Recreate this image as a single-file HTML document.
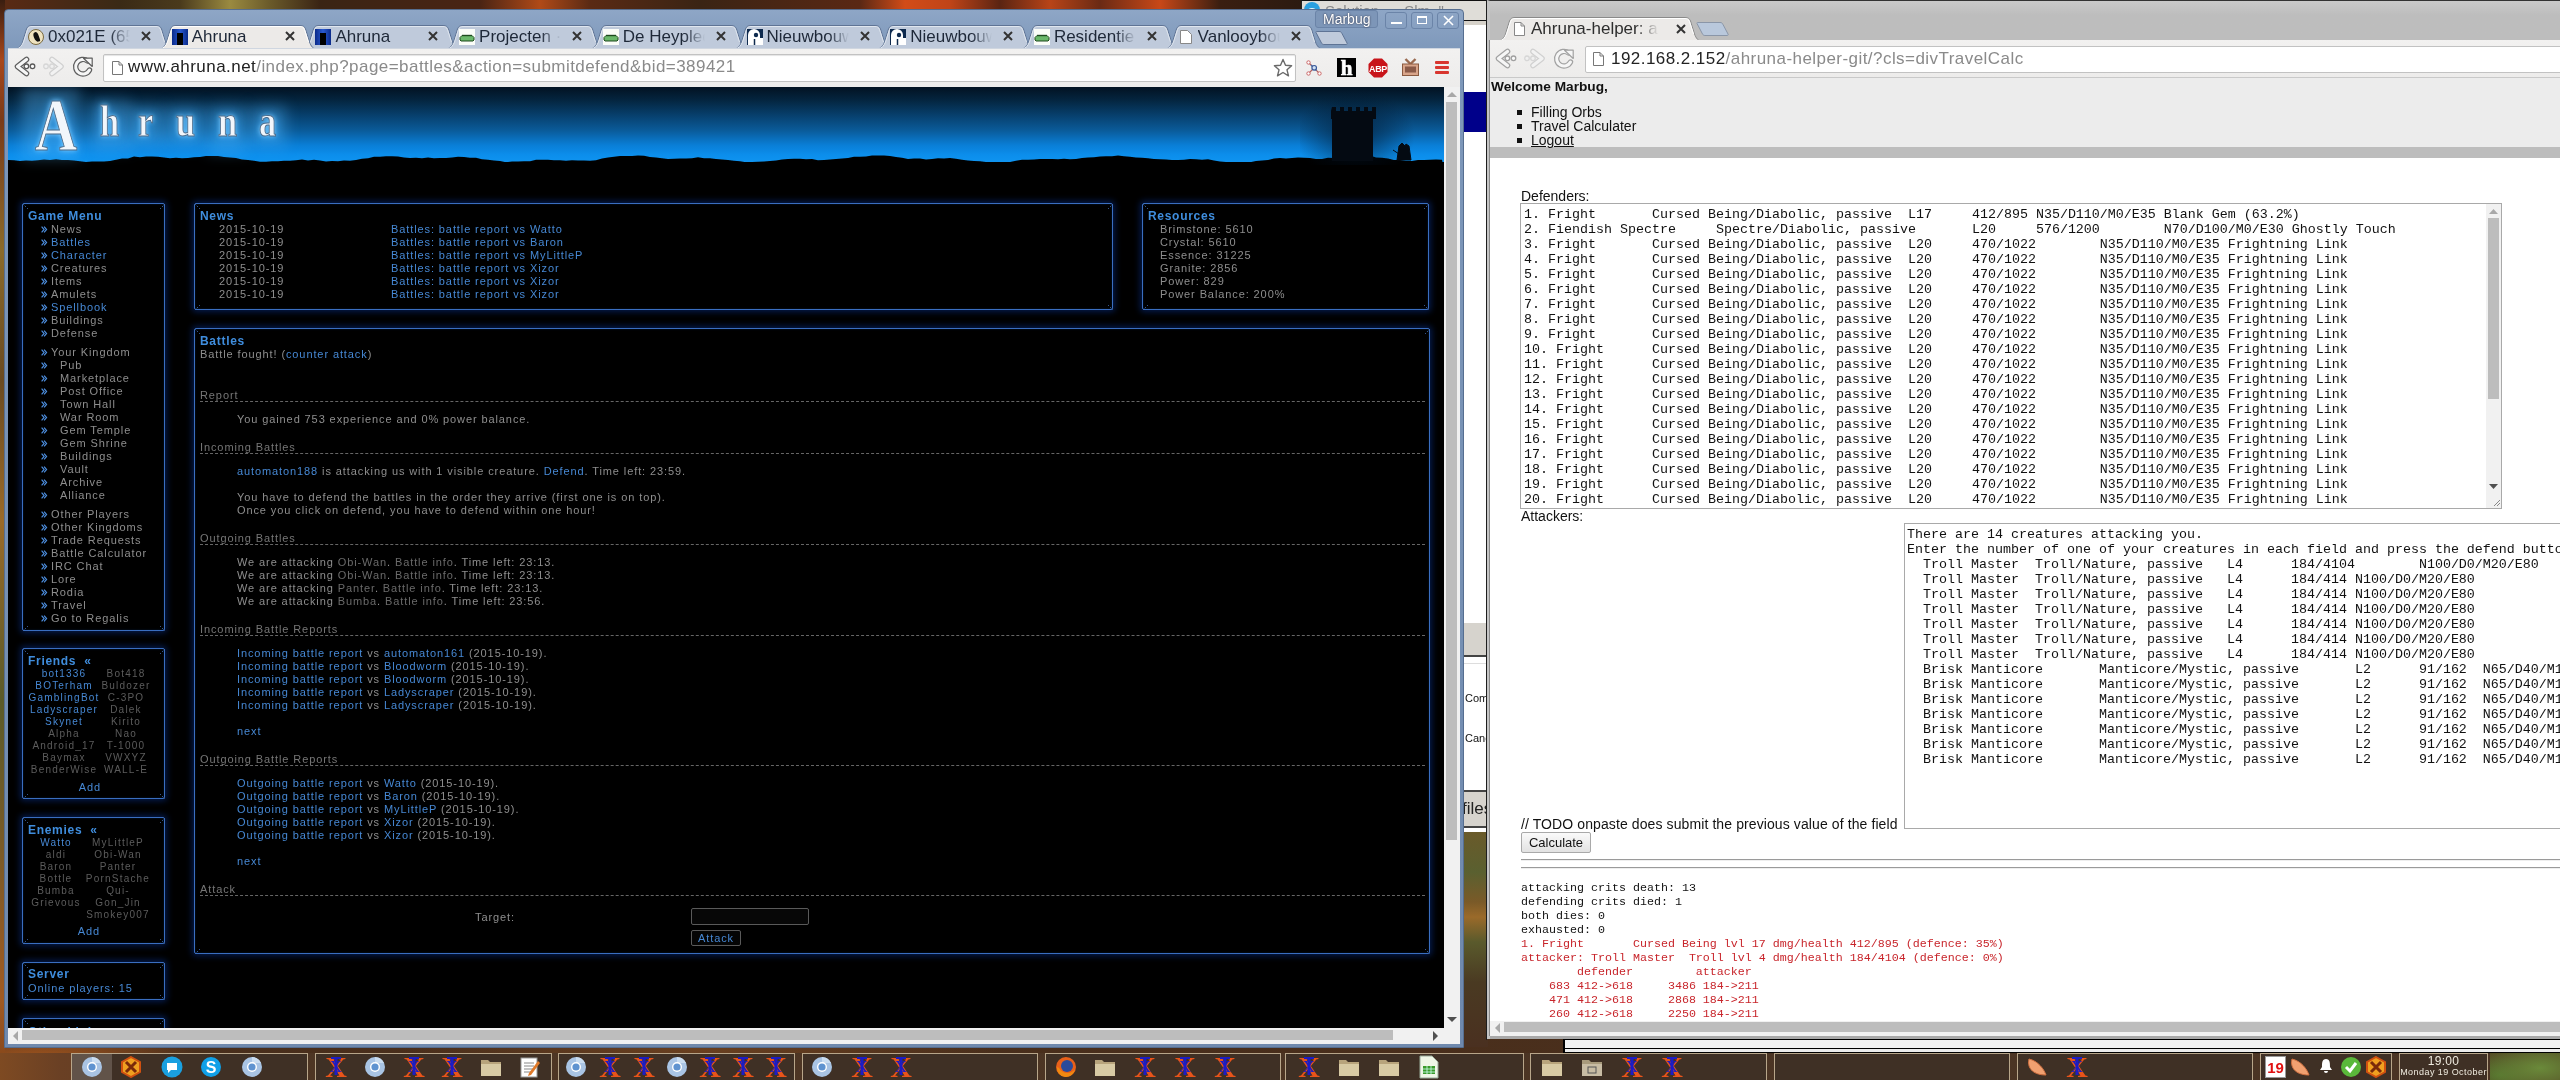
<!DOCTYPE html>
<html><head><meta charset="utf-8"><title>screen</title>
<style>
*{box-sizing:border-box}
html,body{margin:0;padding:0}
body{width:2560px;height:1080px;overflow:hidden;position:relative;will-change:transform;font-family:"Liberation Sans",sans-serif;background:#4a3020;}
.a{position:absolute}
.wp{position:absolute;left:0;top:0;width:2560px;height:1080px;
 background:
  radial-gradient(ellipse 40px 10px at 220px 3px,#a8a050,transparent),
  radial-gradient(ellipse 25px 10px at 540px 4px,#d8601a,transparent),
  radial-gradient(ellipse 30px 10px at 900px 4px,#e04a18,transparent),
  radial-gradient(ellipse 30px 10px at 945px 5px,#e05a20,transparent),
  radial-gradient(ellipse 25px 10px at 1050px 4px,#d04818,transparent),
  radial-gradient(ellipse 25px 10px at 1110px 4px,#c84018,transparent),
  radial-gradient(ellipse 25px 10px at 1160px 4px,#d04a18,transparent),
  radial-gradient(ellipse 20px 10px at 10px 4px,#8a3a1a,transparent),
  radial-gradient(ellipse 8px 200px at 0px 300px,#8a6a30,transparent),
  radial-gradient(ellipse 8px 300px at 0px 700px,#6a6a30,transparent),
  radial-gradient(ellipse 160px 40px at 40px 1062px,#a8581e,transparent),
  radial-gradient(ellipse 300px 30px at 700px 1050px,#6a4020,transparent),
  radial-gradient(ellipse 90px 40px at 2540px 1068px,#6a8a3a,transparent),radial-gradient(ellipse 40px 20px at 2500px 1075px,#4a6a28,transparent),
  radial-gradient(ellipse 30px 70px at 1475px 895px,#6a6a32,transparent),
  radial-gradient(ellipse 20px 30px at 1478px 915px,#9a6a2a,transparent),
  linear-gradient(#2a1c10,#3a2616 30px,#4a2f1c);}
/* chrome tabs */
.tab{position:absolute;height:24px;width:160px}
.tab .bg{position:absolute;inset:0;background:#bdc9da;clip-path:polygon(0 100%,13px 0,calc(100% - 13px) 0,100% 100%);}
.tab.act .bg{background:#eceae8}
.tab .t{position:absolute;left:34px;top:3px;font-size:17px;line-height:18px;color:#1e2838;white-space:nowrap;overflow:hidden;width:82px;
 -webkit-mask-image:linear-gradient(90deg,#000 75%,transparent);}
.tab .x{position:absolute;left:126px;top:5px;width:12px;height:12px}
.tab .ic{position:absolute;left:14px;top:4px;width:16px;height:16px}
/* ahruna */
.pg{position:absolute;background:#000;overflow:hidden}
.bx{position:absolute;border:1px solid #3a6ec0;box-shadow:0 0 6px 2px rgba(10,60,170,.45),inset 0 0 2px rgba(20,90,200,.3);border-radius:2px}
.v{font-family:"Liberation Sans",sans-serif;font-size:11px;letter-spacing:.9px;line-height:13px;white-space:pre;color:#8e8e8e}
.hb{font-weight:bold;color:#3f8ddd;letter-spacing:.9px}
.lk{color:#4688d4}
.gr{color:#9a9a9a}
.dg{color:#777}
.hd{position:absolute;color:#7d7d7d;border-bottom:1px dashed #6a6a6a;height:14px}
.ln{position:absolute}
/* right page */
.m{font-family:"Liberation Mono",monospace;font-size:13.33px;line-height:15px;white-space:pre;color:#111}

</style></head><body>
<div class="wp"></div>
<div class="a" style="left:0;top:0;width:1310px;height:10px;background:linear-gradient(90deg,#5a2a14 0,#3a2a16 120px,#4a3a1c 180px,#9a8a40 230px,#6a5a2a 270px,#3a2414 320px,#4a2414 480px,#b04a18 540px,#5a2a14 590px,#3a2414 700px,#5a2814 860px,#d24c18 905px,#c04418 950px,#5a2412 1000px,#b84418 1050px,#6a2a14 1100px,#c84818 1160px,#3a1e10 1220px,#2a1a10 1310px)"></div>
<div class="a" style="left:0;top:0;width:5px;height:1053px;background:linear-gradient(#3a1e10,#a8481c 60px,#7a3a18 120px,#8a6a2a 250px,#6a4a20 380px,#9a6a28 520px,#5a5a28 700px,#7a5a26 850px,#a05a22 1000px,#8a4a1c 1053px)"></div>
<div class="a" style="left:1462px;top:832px;width:26px;height:215px;background:linear-gradient(#6a5a2a 0,#5a6030 40px,#7a5a28 70px,#9a6a2a 85px,#5a5a2c 110px,#4a3a22 150px,#4a3020 215px)"></div>
<!-- background window strip between -->
<div class="a" style="left:1301px;top:0;width:190px;height:25px;background:linear-gradient(#dfddd8 0,#dfddd8 19px,#111 19px,#111 20px,#d6d2ca 20px,#d6d2ca 24px,#555 24px);border-top:1px solid #111;border-left:1px solid #222"></div>
<div class="a" style="left:1304px;top:2px;width:16px;height:16px;border-radius:50%;background:#2aa0e0"><div style="position:absolute;left:4px;top:6px;width:8px;height:6px;border-radius:50%;background:#eaf6fc"></div></div>
<div class="a" style="left:1325px;top:2px;font-size:15px;line-height:17px;color:#8a8a8a;white-space:nowrap">Solution .... Slm.."</div>
<div class="a" style="left:1462px;top:25px;width:30px;height:807px;background:#fff"></div>
<div class="a" style="left:1462px;top:92px;width:30px;height:40px;background:#00008a"></div>
<div class="a" style="left:1462px;top:623px;width:30px;height:34px;background:#d6d3cd;border-bottom:2px solid #444"></div>
<div class="a" style="left:1462px;top:663px;width:30px;height:1px;background:#ddd"></div>
<div class="a" style="left:1465px;top:692px;font-size:11px;color:#111">Com</div>
<div class="a" style="left:1465px;top:732px;font-size:11px;color:#111">Canc</div>
<div class="a" style="left:1462px;top:790px;width:30px;height:38px;background:#d6d3cd;border-top:2px solid #444;border-bottom:2px solid #444"></div>
<div class="a" style="left:1462px;top:799px;font-size:17px;color:#222">files</div>

<!-- left window frame -->
<div class="a" style="left:4px;top:9px;width:1460px;height:1039px;background:linear-gradient(#8ea6c6,#7e98ba 40px,#6f89ad);border:1px solid #566e90;border-radius:4px 4px 0 0"></div>
<!-- title buttons -->
<div class="a" style="left:1315px;top:10px;width:63px;height:18px;border:1px solid #6b84a8;border-radius:3px;background:#7d96b8"></div>
<div class="a" style="left:1323px;top:11px;font-size:14px;color:#fff;text-shadow:0 0 2px #223">Marbug</div>
<div class="a" style="left:1385px;top:12px;width:22px;height:17px;border:1px solid #6b84a8;border-radius:3px"></div>
<div class="a" style="left:1391px;top:22px;width:11px;height:2px;background:#fff"></div>
<div class="a" style="left:1411px;top:12px;width:22px;height:17px;border:1px solid #6b84a8;border-radius:3px"></div>
<div class="a" style="left:1417px;top:16px;width:10px;height:8px;border:1.5px solid #fff;border-top-width:2.5px"></div>
<div class="a" style="left:1437px;top:12px;width:22px;height:17px;border:1px solid #6b84a8;border-radius:3px"></div>
<svg class="a" style="left:1443px;top:15px" width="11" height="11"><path d="M1 1L10 10M10 1L1 10" stroke="#fff" stroke-width="1.6"/></svg>
<div class="tab" style="left:14.0px;top:25px"><svg class="bg" width="160" height="24" viewBox="0 0 160 24" style="position:absolute;left:0;top:0;clip-path:none;background:none"><path d="M0.5 24C5 24 7 21 8.5 17L12.5 4C13.5 1.5 15 0.5 18 0.5H142C145 0.5 146.5 1.5 147.5 4L151.5 17C153 21 155 24 159.5 24" fill="#bfcadb" stroke="#5f7495" stroke-width="1"/><path d="M2 24C6 23.5 8 20.5 9.5 17L13.5 4.5C14.5 2.2 16 1.5 18 1.5H142C144 1.5 145.5 2.2 146.5 4.5L150.5 17" fill="none" stroke="#dfe6ef" stroke-width="1"/></svg><div class="ic" style="border-radius:50%;background:#efe3c0;border:1px solid #7a6a40"><div style="position:absolute;left:5px;top:2px;width:5px;height:10px;background:#111;border-radius:50% 50% 20% 60%;transform:rotate(-20deg)"></div></div><div class="t">0x021E (65536)</div><svg class="x" viewBox="0 0 12 12"><path d="M2 2L10 10M10 2L2 10" stroke="#333" stroke-width="2"/></svg></div>
<div class="tab" style="left:301.4px;top:25px"><svg class="bg" width="160" height="24" viewBox="0 0 160 24" style="position:absolute;left:0;top:0;clip-path:none;background:none"><path d="M0.5 24C5 24 7 21 8.5 17L12.5 4C13.5 1.5 15 0.5 18 0.5H142C145 0.5 146.5 1.5 147.5 4L151.5 17C153 21 155 24 159.5 24" fill="#bfcadb" stroke="#5f7495" stroke-width="1"/><path d="M2 24C6 23.5 8 20.5 9.5 17L13.5 4.5C14.5 2.2 16 1.5 18 1.5H142C144 1.5 145.5 2.2 146.5 4.5L150.5 17" fill="none" stroke="#dfe6ef" stroke-width="1"/></svg><div class="ic" style="background:linear-gradient(90deg,#0a2a8a,#2a5ad0 50%,#0a2a8a)"><div style="position:absolute;left:5px;top:4px;width:6px;height:12px;background:#000"></div></div><div class="t">Ahruna</div><svg class="x" viewBox="0 0 12 12"><path d="M2 2L10 10M10 2L2 10" stroke="#333" stroke-width="2"/></svg></div>
<div class="tab" style="left:445.1px;top:25px"><svg class="bg" width="160" height="24" viewBox="0 0 160 24" style="position:absolute;left:0;top:0;clip-path:none;background:none"><path d="M0.5 24C5 24 7 21 8.5 17L12.5 4C13.5 1.5 15 0.5 18 0.5H142C145 0.5 146.5 1.5 147.5 4L151.5 17C153 21 155 24 159.5 24" fill="#bfcadb" stroke="#5f7495" stroke-width="1"/><path d="M2 24C6 23.5 8 20.5 9.5 17L13.5 4.5C14.5 2.2 16 1.5 18 1.5H142C144 1.5 145.5 2.2 146.5 4.5L150.5 17" fill="none" stroke="#dfe6ef" stroke-width="1"/></svg><div class="ic" style="background:#fbfdf8"><svg width="16" height="16" viewBox="0 0 16 16"><path d="M1 8.5L3 6.5h10l2 2v2.5l-1 1H2l-1-1z" fill="#6ab86a" stroke="#1e4a1e" stroke-width="1"/><path d="M3 6.5h10" stroke="#1e4a1e" stroke-width="1.4"/></svg></div><div class="t">Projecten · Heyplec</div><svg class="x" viewBox="0 0 12 12"><path d="M2 2L10 10M10 2L2 10" stroke="#333" stroke-width="2"/></svg></div>
<div class="tab" style="left:588.8px;top:25px"><svg class="bg" width="160" height="24" viewBox="0 0 160 24" style="position:absolute;left:0;top:0;clip-path:none;background:none"><path d="M0.5 24C5 24 7 21 8.5 17L12.5 4C13.5 1.5 15 0.5 18 0.5H142C145 0.5 146.5 1.5 147.5 4L151.5 17C153 21 155 24 159.5 24" fill="#bfcadb" stroke="#5f7495" stroke-width="1"/><path d="M2 24C6 23.5 8 20.5 9.5 17L13.5 4.5C14.5 2.2 16 1.5 18 1.5H142C144 1.5 145.5 2.2 146.5 4.5L150.5 17" fill="none" stroke="#dfe6ef" stroke-width="1"/></svg><div class="ic" style="background:#fbfdf8"><svg width="16" height="16" viewBox="0 0 16 16"><path d="M1 8.5L3 6.5h10l2 2v2.5l-1 1H2l-1-1z" fill="#6ab86a" stroke="#1e4a1e" stroke-width="1"/><path d="M3 6.5h10" stroke="#1e4a1e" stroke-width="1.4"/></svg></div><div class="t">De Heyplec</div><svg class="x" viewBox="0 0 12 12"><path d="M2 2L10 10M10 2L2 10" stroke="#333" stroke-width="2"/></svg></div>
<div class="tab" style="left:732.5px;top:25px"><svg class="bg" width="160" height="24" viewBox="0 0 160 24" style="position:absolute;left:0;top:0;clip-path:none;background:none"><path d="M0.5 24C5 24 7 21 8.5 17L12.5 4C13.5 1.5 15 0.5 18 0.5H142C145 0.5 146.5 1.5 147.5 4L151.5 17C153 21 155 24 159.5 24" fill="#bfcadb" stroke="#5f7495" stroke-width="1"/><path d="M2 24C6 23.5 8 20.5 9.5 17L13.5 4.5C14.5 2.2 16 1.5 18 1.5H142C144 1.5 145.5 2.2 146.5 4.5L150.5 17" fill="none" stroke="#dfe6ef" stroke-width="1"/></svg><div class="ic"><svg width="16" height="16" viewBox="0 0 16 16"><rect x="0" y="0" width="16" height="16" fill="#0e2a4e"/><path d="M1 16V6A6 6 0 0 1 13 6V9A3 3 0 0 1 8 9H16V16Z" fill="#fff"/><path d="M7.5 10v6" stroke="#0e2a4e" stroke-width="1.5"/><circle cx="9" cy="6" r="2.2" fill="#0e2a4e"/></svg></div><div class="t">Nieuwbouw</div><svg class="x" viewBox="0 0 12 12"><path d="M2 2L10 10M10 2L2 10" stroke="#333" stroke-width="2"/></svg></div>
<div class="tab" style="left:876.2px;top:25px"><svg class="bg" width="160" height="24" viewBox="0 0 160 24" style="position:absolute;left:0;top:0;clip-path:none;background:none"><path d="M0.5 24C5 24 7 21 8.5 17L12.5 4C13.5 1.5 15 0.5 18 0.5H142C145 0.5 146.5 1.5 147.5 4L151.5 17C153 21 155 24 159.5 24" fill="#bfcadb" stroke="#5f7495" stroke-width="1"/><path d="M2 24C6 23.5 8 20.5 9.5 17L13.5 4.5C14.5 2.2 16 1.5 18 1.5H142C144 1.5 145.5 2.2 146.5 4.5L150.5 17" fill="none" stroke="#dfe6ef" stroke-width="1"/></svg><div class="ic"><svg width="16" height="16" viewBox="0 0 16 16"><rect x="0" y="0" width="16" height="16" fill="#0e2a4e"/><path d="M1 16V6A6 6 0 0 1 13 6V9A3 3 0 0 1 8 9H16V16Z" fill="#fff"/><path d="M7.5 10v6" stroke="#0e2a4e" stroke-width="1.5"/><circle cx="9" cy="6" r="2.2" fill="#0e2a4e"/></svg></div><div class="t">Nieuwbouw</div><svg class="x" viewBox="0 0 12 12"><path d="M2 2L10 10M10 2L2 10" stroke="#333" stroke-width="2"/></svg></div>
<div class="tab" style="left:1019.9px;top:25px"><svg class="bg" width="160" height="24" viewBox="0 0 160 24" style="position:absolute;left:0;top:0;clip-path:none;background:none"><path d="M0.5 24C5 24 7 21 8.5 17L12.5 4C13.5 1.5 15 0.5 18 0.5H142C145 0.5 146.5 1.5 147.5 4L151.5 17C153 21 155 24 159.5 24" fill="#bfcadb" stroke="#5f7495" stroke-width="1"/><path d="M2 24C6 23.5 8 20.5 9.5 17L13.5 4.5C14.5 2.2 16 1.5 18 1.5H142C144 1.5 145.5 2.2 146.5 4.5L150.5 17" fill="none" stroke="#dfe6ef" stroke-width="1"/></svg><div class="ic" style="background:#fbfdf8"><svg width="16" height="16" viewBox="0 0 16 16"><path d="M1 8.5L3 6.5h10l2 2v2.5l-1 1H2l-1-1z" fill="#6ab86a" stroke="#1e4a1e" stroke-width="1"/><path d="M3 6.5h10" stroke="#1e4a1e" stroke-width="1.4"/></svg></div><div class="t">Residentie F</div><svg class="x" viewBox="0 0 12 12"><path d="M2 2L10 10M10 2L2 10" stroke="#333" stroke-width="2"/></svg></div>
<div class="tab" style="left:1163.6px;top:25px"><svg class="bg" width="160" height="24" viewBox="0 0 160 24" style="position:absolute;left:0;top:0;clip-path:none;background:none"><path d="M0.5 24C5 24 7 21 8.5 17L12.5 4C13.5 1.5 15 0.5 18 0.5H142C145 0.5 146.5 1.5 147.5 4L151.5 17C153 21 155 24 159.5 24" fill="#bfcadb" stroke="#5f7495" stroke-width="1"/><path d="M2 24C6 23.5 8 20.5 9.5 17L13.5 4.5C14.5 2.2 16 1.5 18 1.5H142C144 1.5 145.5 2.2 146.5 4.5L150.5 17" fill="none" stroke="#dfe6ef" stroke-width="1"/></svg><div class="ic" style="left:15px"><svg width="14" height="16"><path d="M1.5 1.5h7l4 4v9h-11z" fill="#fff" stroke="#888"/></svg></div><div class="t">Vanlooybouw</div><svg class="x" viewBox="0 0 12 12"><path d="M2 2L10 10M10 2L2 10" stroke="#333" stroke-width="2"/></svg></div>
<div class="tab act" style="left:157.7px;top:25px"><svg class="bg" width="160" height="24" viewBox="0 0 160 24" style="position:absolute;left:0;top:0;clip-path:none;background:none"><path d="M0 24.5C5 24.5 7 21 8.5 17L12.5 4C13.5 1.5 15 0.5 18 0.5H142C145 0.5 146.5 1.5 147.5 4L151.5 17C153 21 155 24.5 160 24.5Z" fill="#eceae8" stroke="#5f7495" stroke-width="1"/><path d="M2 24C6 23.5 8 20.5 9.5 17L13.5 4.5C14.5 2.2 16 1.5 18 1.5H142C144 1.5 145.5 2.2 146.5 4.5L150.5 17" fill="none" stroke="#fff" stroke-width="1"/></svg><div class="ic" style="background:linear-gradient(90deg,#0a2a8a,#2a5ad0 50%,#0a2a8a)"><div style="position:absolute;left:5px;top:4px;width:6px;height:12px;background:#000"></div></div><div class="t">Ahruna</div><svg class="x" viewBox="0 0 12 12"><path d="M2 2L10 10M10 2L2 10" stroke="#333" stroke-width="2"/></svg></div>
<svg class="a" style="left:1315px;top:30px" width="34" height="16" viewBox="0 0 34 16"><path d="M1.5 1.5H24C25.5 1.5 26.5 2.2 27 3.5L32 13C32.5 14 32 14.5 31 14.5H9C7.8 14.5 7 14 6.5 13L1 2.5C0.8 1.8 1 1.5 1.5 1.5Z" fill="#bfcadb" stroke="#5f7495" stroke-width="1"/></svg>
<div class="a" style="left:8px;top:48px;width:1452px;height:39px;background:linear-gradient(#f2f1f0,#edeceb);border-top:1px solid #cfd6e0"></div>
<!-- back/fwd/reload -->
<svg class="a" style="left:8px;top:48px" width="30" height="36" viewBox="0 0 30 36"><path d="M18.5 11.5L9.5 18.5L18.5 25.5" fill="none" stroke="#5e5e5e" stroke-width="5.6" stroke-linecap="round" stroke-linejoin="round"/><path d="M18.5 11.5L9.5 18.5L18.5 25.5" fill="none" stroke="#f6f6f6" stroke-width="3.2" stroke-linecap="round" stroke-linejoin="round"/><circle cx="18.4" cy="18.3" r="2.3" fill="#fafafa" stroke="#5a5a5a" stroke-width="1.3"/><circle cx="24.5" cy="18.3" r="2.3" fill="#fafafa" stroke="#5a5a5a" stroke-width="1.3"/></svg>
<svg class="a" style="left:38px;top:48px" width="30" height="36" viewBox="0 0 30 36"><path d="M14 11.5L23 18.5L14 25.5" fill="none" stroke="#d0d0d0" stroke-width="5.6" stroke-linecap="round" stroke-linejoin="round"/><path d="M14 11.5L23 18.5L14 25.5" fill="none" stroke="#f2f2f2" stroke-width="3.2" stroke-linecap="round" stroke-linejoin="round"/><circle cx="8" cy="18.3" r="2.3" fill="#f0f0f0" stroke="#d6d6d6" stroke-width="1.3"/><circle cx="14" cy="18.3" r="2.3" fill="#f0f0f0" stroke="#d6d6d6" stroke-width="1.3"/></svg>
<svg class="a" style="left:68px;top:48px" width="30" height="36" viewBox="0 0 30 36"><path d="M21.5 22A7.3 7.3 0 1 1 19.5 13" fill="none" stroke="#5e5e5e" stroke-width="5.4" stroke-linecap="round"/><path d="M21.5 22A7.3 7.3 0 1 1 19.5 13" fill="none" stroke="#f6f6f6" stroke-width="3" stroke-linecap="round"/><path d="M15.5 10.2L24.2 10.2L24.2 18.5Z" fill="#f6f6f6" stroke="#5e5e5e" stroke-width="1.2" stroke-linejoin="round"/></svg>
<!-- omnibox -->
<div class="a" style="left:103px;top:54px;width:1193px;height:28px;background:#fff;border:1px solid #c2c2c2;border-radius:2px;box-shadow:inset 0 1px 1px #e4e4e4"></div>
<svg class="a" style="left:111px;top:60px" width="13" height="16"><path d="M1.5 1.5h6.5l3.5 3.5v9.5h-10z M8 1.5v3.5h3.5" fill="#fff" stroke="#777"/></svg>
<div class="a" style="left:128px;top:57px;font-size:17px;line-height:20px;white-space:pre;color:#222;letter-spacing:.45px">www.ahruna.net<span style="color:#8a8a8a">/index.php?page=battles&amp;action=submitdefend&amp;bid=389421</span></div>
<svg class="a" style="left:1272px;top:57px" width="22" height="22" viewBox="0 0 22 22"><path d="M11 2.5L13.5 8.3L19.6 8.8L15 12.8L16.5 18.8L11 15.5L5.5 18.8L7 12.8L2.4 8.8L8.5 8.3Z" fill="#fff" stroke="#6a6a6a" stroke-width="1.4" stroke-linejoin="round"/></svg>
<!-- extension icons -->
<svg class="a" style="left:1305px;top:59px" width="18" height="18" viewBox="0 0 18 18"><path d="M3.5 3.5L9 9M3.5 14.5L9 9M14.5 14.5L9 9" stroke="#b06060" stroke-width="1.1" fill="none"/><path d="M6 6L9 9M9 9L11.5 11.5" stroke="#4a6aa0" stroke-width="1.3"/><circle cx="9.2" cy="8.8" r="2.3" fill="#cfe0f4" stroke="#3a5a9a" stroke-width="1.2"/><circle cx="3.5" cy="3.5" r="1.7" fill="#fff" stroke="#c66" stroke-width="1"/><circle cx="14.5" cy="14.5" r="1.7" fill="#fff" stroke="#c66" stroke-width="1"/><circle cx="3.5" cy="14.5" r="1.7" fill="#fff" stroke="#c66" stroke-width="1"/></svg>
<div class="a" style="left:1337px;top:58px;width:19px;height:19px;background:#000;color:#fff;font-family:'Liberation Serif',serif;font-weight:bold;font-size:21px;line-height:21px;text-align:center;-webkit-text-stroke:.7px #fff">h</div>
<svg class="a" style="left:1368px;top:58px" width="20" height="20" viewBox="0 0 20 20"><path d="M6 0.5h8l5.5 5.5v8l-5.5 5.5h-8l-5.5-5.5v-8z" fill="#c8141a"/><text x="10" y="13.6" font-family="Liberation Sans" font-weight="bold" font-size="9" letter-spacing="-0.4" fill="#fff" text-anchor="middle">ABP</text></svg>
<svg class="a" style="left:1401px;top:58px" width="19" height="19" viewBox="0 0 19 19"><path d="M4.5 1L9.5 6L14.5 1" stroke="#9a6a50" stroke-width="2.4" fill="none"/><rect x="1.5" y="6" width="16" height="11.5" fill="#d9a58a" stroke="#8a5a40"/><rect x="4" y="8.5" width="11" height="6" fill="#8a5a48"/></svg>
<div class="a" style="left:1435px;top:61px;width:14px;height:3px;background:#d8362f;border-radius:1px;box-shadow:0 5px 0 #d8362f,0 10px 0 #d8362f"></div>
<div class="a" style="left:0;top:0;width:2560px;height:1080px;clip-path:inset(87px 1116px 52px 8px)">
<div class="pg" style="left:8px;top:87px;width:1436px;height:941px"></div>
<div class="a" style="left:8px;top:87px;width:1436px;height:75px;background:linear-gradient(#021222 0px,#04253f 13px,#073f6c 28px,#0a5a98 43px,#0a7ed6 58px,#0c8eec 68px,#0f94f0 75px)"></div>
<svg class="a" style="left:8px;top:150px" width="1436" height="22" viewBox="0 0 1436 22"><defs><filter id="hb"><feGaussianBlur stdDeviation="0.7"/></filter></defs><path filter="url(#hb)" d="M0 20 L0 9.9 L6 10.2 L12 11.1 L18 10.4 L24 10.8 L30 10.2 L36 9.5 L42 9.9 L48 9.3 L54 9.9 L60 9.9 L66 10.4 L72 11.3 L78 12.1 L84 11.4 L90 11.4 L96 11.4 L102 11.1 L108 9.7 L114 8.6 L120 8.4 L126 6.6 L132 7.2 L138 6.5 L144 6.5 L150 6.8 L156 7.4 L162 8.3 L168 7.7 L174 8.2 L180 8.0 L186 7.3 L192 7.0 L198 6.1 L204 5.9 L210 6.1 L216 7.0 L222 7.4 L228 8.1 L234 9.4 L240 10.1 L246 10.7 L252 11.8 L258 11.8 L264 11.2 L270 11.2 L276 10.8 L282 10.8 L288 10.3 L294 9.6 L300 10.6 L306 9.8 L312 10.6 L318 11.4 L324 10.9 L330 11.3 L336 10.5 L342 10.7 L348 10.0 L354 8.8 L360 8.3 L366 6.8 L372 6.7 L378 6.3 L384 6.3 L390 6.4 L396 7.4 L402 8.0 L408 7.8 L414 8.3 L420 7.6 L426 8.3 L432 7.9 L438 8.0 L444 7.5 L450 6.7 L456 7.0 L462 7.8 L468 7.8 L474 9.2 L480 9.8 L486 10.5 L492 11.1 L498 12.3 L504 11.6 L510 11.5 L516 11.2 L522 11.2 L528 9.8 L534 9.8 L540 9.7 L546 10.2 L552 10.3 L558 10.7 L564 10.2 L570 10.5 L576 10.4 L582 10.7 L588 10.2 L594 8.4 L600 7.5 L606 6.7 L612 6.0 L618 5.9 L624 5.9 L630 5.6 L636 5.8 L642 6.9 L648 7.4 L654 8.2 L660 9.0 L666 8.8 L672 8.5 L678 8.4 L684 8.2 L690 7.2 L696 8.2 L702 8.3 L708 8.9 L714 9.5 L720 9.9 L726 10.8 L732 11.2 L738 12.3 L744 11.9 L750 11.7 L756 11.5 L762 10.9 L768 10.4 L774 9.4 L780 8.9 L786 8.8 L792 8.7 L798 9.2 L804 9.0 L810 10.3 L816 10.0 L822 9.4 L828 9.1 L834 8.6 L840 7.9 L846 6.7 L852 6.8 L858 6.4 L864 5.5 L870 5.6 L876 5.4 L882 6.1 L888 7.1 L894 7.7 L900 9.0 L906 8.6 L912 8.6 L918 9.6 L924 8.9 L930 8.2 L936 8.5 L942 7.9 L948 8.8 L954 9.8 L960 10.4 L966 10.9 L972 11.2 L978 11.9 L984 12.0 L990 12.8 L996 12.2 L1002 12.0 L1008 10.7 L1014 9.8 L1020 9.8 L1026 9.4 L1032 9.0 L1038 8.9 L1044 9.0 L1050 9.2 L1056 8.8 L1062 9.2 L1068 8.9 L1074 8.1 L1080 7.6 L1086 7.2 L1092 6.4 L1098 6.3 L1104 6.2 L1110 5.5 L1116 6.3 L1122 6.8 L1128 7.5 L1134 7.7 L1140 8.3 L1146 8.9 L1152 9.3 L1158 9.5 L1164 9.9 L1170 10.1 L1176 9.7 L1182 9.1 L1188 9.3 L1194 9.7 L1200 9.3 L1206 10.6 L1212 11.6 L1218 12.1 L1224 12.5 L1230 12.4 L1236 11.9 L1242 12.2 L1248 10.9 L1254 10.6 L1260 10.0 L1266 8.5 L1272 8.0 L1278 8.4 L1284 8.1 L1290 7.6 L1296 7.8 L1302 8.0 L1308 9.1 L1314 8.9 L1320 7.8 L1326 8.1 L1332 7.7 L1338 6.7 L1344 5.8 L1350 5.8 L1356 5.4 L1362 5.6 L1368 7.4 L1374 7.8 L1380 8.6 L1386 9.9 L1392 10.0 L1398 10.9 L1404 11.0 L1410 10.1 L1416 9.9 L1422 9.7 L1428 9.4 L1434 9.8 L1436 20Z" fill="#000"/></svg>
<div class="a" style="left:8px;top:165px;width:1436px;height:30px;background:#000"></div>
<div class="a" style="left:1300px;top:90px;width:140px;height:75px;background:radial-gradient(ellipse 60px 45px at 55px 45px,rgba(0,20,40,.7),transparent)"></div>
<svg class="a" style="left:1331px;top:104px" width="90" height="60" viewBox="0 0 90 60"><path d="M1 3h4v4h4v-4h4v4h4v-4h4v4h4v-4h4v4h4v-4h4v4h4v-4h4v12h-3v42h-41v-42h-3z" fill="#040a12"/><path d="M66 56l2-14 3-3 3 3 1-2 3 2 2 14z M62 46l6 4" fill="#040a12" stroke="#040a12"/></svg>
<div class="a" style="left:22px;top:88px;width:58px;height:70px;background:rgba(90,190,255,.35);filter:blur(7px)"></div>
<div class="a" style="left:90px;top:100px;width:40px;height:50px;background:rgba(90,190,255,.35);filter:blur(7px)"></div>
<div class="a" style="left:128px;top:106px;width:36px;height:40px;background:rgba(90,190,255,.35);filter:blur(7px)"></div>
<div class="a" style="left:166px;top:106px;width:38px;height:40px;background:rgba(90,190,255,.35);filter:blur(7px)"></div>
<div class="a" style="left:208px;top:106px;width:38px;height:46px;background:rgba(90,190,255,.35);filter:blur(7px)"></div>
<div class="a" style="left:250px;top:106px;width:36px;height:40px;background:rgba(90,190,255,.35);filter:blur(7px)"></div>
<div class="a" style="left:35px;top:87.2px;width:42px;height:75px;overflow:visible"><div style="display:inline-block;transform-origin:0 0;transform:scaleX(.78);font-family:'Liberation Serif',serif;font-weight:bold;font-size:75px;line-height:75px;color:#f2f6fb;-webkit-text-stroke:1px #4a6a8a;text-shadow:0 0 6px #8ad4ff,0 0 12px #3aa8ff">A</div></div>
<div class="a" style="left:100px;top:100.2px;width:17px;height:44px;overflow:visible"><div style="display:inline-block;transform-origin:0 0;transform:scaleX(.78);font-family:'Liberation Serif',serif;font-weight:bold;font-size:44px;line-height:44px;color:#f2f6fb;-webkit-text-stroke:1px #4a6a8a;text-shadow:0 0 6px #8ad4ff,0 0 12px #3aa8ff">h</div></div>
<div class="a" style="left:138px;top:100.2px;width:16px;height:44px;overflow:visible"><div style="display:inline-block;transform-origin:0 0;transform:scaleX(.78);font-family:'Liberation Serif',serif;font-weight:bold;font-size:44px;line-height:44px;color:#f2f6fb;-webkit-text-stroke:1px #4a6a8a;text-shadow:0 0 6px #8ad4ff,0 0 12px #3aa8ff">r</div></div>
<div class="a" style="left:176px;top:100.2px;width:19px;height:44px;overflow:visible"><div style="display:inline-block;transform-origin:0 0;transform:scaleX(.78);font-family:'Liberation Serif',serif;font-weight:bold;font-size:44px;line-height:44px;color:#f2f6fb;-webkit-text-stroke:1px #4a6a8a;text-shadow:0 0 6px #8ad4ff,0 0 12px #3aa8ff">u</div></div>
<div class="a" style="left:218px;top:100.2px;width:19px;height:44px;overflow:visible"><div style="display:inline-block;transform-origin:0 0;transform:scaleX(.78);font-family:'Liberation Serif',serif;font-weight:bold;font-size:44px;line-height:44px;color:#f2f6fb;-webkit-text-stroke:1px #4a6a8a;text-shadow:0 0 6px #8ad4ff,0 0 12px #3aa8ff">n</div></div>
<div class="a" style="left:259px;top:100.2px;width:18px;height:44px;overflow:visible"><div style="display:inline-block;transform-origin:0 0;transform:scaleX(.78);font-family:'Liberation Serif',serif;font-weight:bold;font-size:44px;line-height:44px;color:#f2f6fb;-webkit-text-stroke:1px #4a6a8a;text-shadow:0 0 6px #8ad4ff,0 0 12px #3aa8ff">a</div></div>
<div class="bx" style="left:22px;top:203px;width:143px;height:428px"></div>
<svg class="a" style="left:23px;top:204px" width="6" height="6"><path d="M0.5 0.5L5 5" stroke="#4a7ac8" stroke-width="1" stroke-dasharray="1 1.5" fill="none"/></svg>
<svg class="a" style="left:159px;top:204px" width="6" height="6"><path d="M5.5 0.5L1 5" stroke="#4a7ac8" stroke-width="1" stroke-dasharray="1 1.5" fill="none"/></svg>
<svg class="a" style="left:23px;top:625px" width="6" height="6"><path d="M0.5 5.5L5 1" stroke="#4a7ac8" stroke-width="1" stroke-dasharray="1 1.5" fill="none"/></svg>
<svg class="a" style="left:159px;top:625px" width="6" height="6"><path d="M5.5 5.5L1 1" stroke="#4a7ac8" stroke-width="1" stroke-dasharray="1 1.5" fill="none"/></svg>
<div class="bx" style="left:194px;top:203px;width:919px;height:107px"></div>
<svg class="a" style="left:195px;top:204px" width="6" height="6"><path d="M0.5 0.5L5 5" stroke="#4a7ac8" stroke-width="1" stroke-dasharray="1 1.5" fill="none"/></svg>
<svg class="a" style="left:1107px;top:204px" width="6" height="6"><path d="M5.5 0.5L1 5" stroke="#4a7ac8" stroke-width="1" stroke-dasharray="1 1.5" fill="none"/></svg>
<svg class="a" style="left:195px;top:304px" width="6" height="6"><path d="M0.5 5.5L5 1" stroke="#4a7ac8" stroke-width="1" stroke-dasharray="1 1.5" fill="none"/></svg>
<svg class="a" style="left:1107px;top:304px" width="6" height="6"><path d="M5.5 5.5L1 1" stroke="#4a7ac8" stroke-width="1" stroke-dasharray="1 1.5" fill="none"/></svg>
<div class="bx" style="left:1142px;top:203px;width:287px;height:107px"></div>
<svg class="a" style="left:1143px;top:204px" width="6" height="6"><path d="M0.5 0.5L5 5" stroke="#4a7ac8" stroke-width="1" stroke-dasharray="1 1.5" fill="none"/></svg>
<svg class="a" style="left:1423px;top:204px" width="6" height="6"><path d="M5.5 0.5L1 5" stroke="#4a7ac8" stroke-width="1" stroke-dasharray="1 1.5" fill="none"/></svg>
<svg class="a" style="left:1143px;top:304px" width="6" height="6"><path d="M0.5 5.5L5 1" stroke="#4a7ac8" stroke-width="1" stroke-dasharray="1 1.5" fill="none"/></svg>
<svg class="a" style="left:1423px;top:304px" width="6" height="6"><path d="M5.5 5.5L1 1" stroke="#4a7ac8" stroke-width="1" stroke-dasharray="1 1.5" fill="none"/></svg>
<div class="bx" style="left:194px;top:328px;width:1236px;height:626px"></div>
<svg class="a" style="left:195px;top:329px" width="6" height="6"><path d="M0.5 0.5L5 5" stroke="#4a7ac8" stroke-width="1" stroke-dasharray="1 1.5" fill="none"/></svg>
<svg class="a" style="left:1424px;top:329px" width="6" height="6"><path d="M5.5 0.5L1 5" stroke="#4a7ac8" stroke-width="1" stroke-dasharray="1 1.5" fill="none"/></svg>
<svg class="a" style="left:195px;top:948px" width="6" height="6"><path d="M0.5 5.5L5 1" stroke="#4a7ac8" stroke-width="1" stroke-dasharray="1 1.5" fill="none"/></svg>
<svg class="a" style="left:1424px;top:948px" width="6" height="6"><path d="M5.5 5.5L1 1" stroke="#4a7ac8" stroke-width="1" stroke-dasharray="1 1.5" fill="none"/></svg>
<div class="bx" style="left:22px;top:648px;width:143px;height:151px"></div>
<svg class="a" style="left:23px;top:649px" width="6" height="6"><path d="M0.5 0.5L5 5" stroke="#4a7ac8" stroke-width="1" stroke-dasharray="1 1.5" fill="none"/></svg>
<svg class="a" style="left:159px;top:649px" width="6" height="6"><path d="M5.5 0.5L1 5" stroke="#4a7ac8" stroke-width="1" stroke-dasharray="1 1.5" fill="none"/></svg>
<svg class="a" style="left:23px;top:793px" width="6" height="6"><path d="M0.5 5.5L5 1" stroke="#4a7ac8" stroke-width="1" stroke-dasharray="1 1.5" fill="none"/></svg>
<svg class="a" style="left:159px;top:793px" width="6" height="6"><path d="M5.5 5.5L1 1" stroke="#4a7ac8" stroke-width="1" stroke-dasharray="1 1.5" fill="none"/></svg>
<div class="bx" style="left:22px;top:817px;width:143px;height:127px"></div>
<svg class="a" style="left:23px;top:818px" width="6" height="6"><path d="M0.5 0.5L5 5" stroke="#4a7ac8" stroke-width="1" stroke-dasharray="1 1.5" fill="none"/></svg>
<svg class="a" style="left:159px;top:818px" width="6" height="6"><path d="M5.5 0.5L1 5" stroke="#4a7ac8" stroke-width="1" stroke-dasharray="1 1.5" fill="none"/></svg>
<svg class="a" style="left:23px;top:938px" width="6" height="6"><path d="M0.5 5.5L5 1" stroke="#4a7ac8" stroke-width="1" stroke-dasharray="1 1.5" fill="none"/></svg>
<svg class="a" style="left:159px;top:938px" width="6" height="6"><path d="M5.5 5.5L1 1" stroke="#4a7ac8" stroke-width="1" stroke-dasharray="1 1.5" fill="none"/></svg>
<div class="bx" style="left:22px;top:962px;width:143px;height:38px"></div>
<svg class="a" style="left:23px;top:963px" width="6" height="6"><path d="M0.5 0.5L5 5" stroke="#4a7ac8" stroke-width="1" stroke-dasharray="1 1.5" fill="none"/></svg>
<svg class="a" style="left:159px;top:963px" width="6" height="6"><path d="M5.5 0.5L1 5" stroke="#4a7ac8" stroke-width="1" stroke-dasharray="1 1.5" fill="none"/></svg>
<svg class="a" style="left:23px;top:994px" width="6" height="6"><path d="M0.5 5.5L5 1" stroke="#4a7ac8" stroke-width="1" stroke-dasharray="1 1.5" fill="none"/></svg>
<svg class="a" style="left:159px;top:994px" width="6" height="6"><path d="M5.5 5.5L1 1" stroke="#4a7ac8" stroke-width="1" stroke-dasharray="1 1.5" fill="none"/></svg>
<div class="bx" style="left:22px;top:1018px;width:143px;height:23px"></div>
<svg class="a" style="left:23px;top:1019px" width="6" height="6"><path d="M0.5 0.5L5 5" stroke="#4a7ac8" stroke-width="1" stroke-dasharray="1 1.5" fill="none"/></svg>
<svg class="a" style="left:159px;top:1019px" width="6" height="6"><path d="M5.5 0.5L1 5" stroke="#4a7ac8" stroke-width="1" stroke-dasharray="1 1.5" fill="none"/></svg>
<svg class="a" style="left:23px;top:1035px" width="6" height="6"><path d="M0.5 5.5L5 1" stroke="#4a7ac8" stroke-width="1" stroke-dasharray="1 1.5" fill="none"/></svg>
<svg class="a" style="left:159px;top:1035px" width="6" height="6"><path d="M5.5 5.5L1 1" stroke="#4a7ac8" stroke-width="1" stroke-dasharray="1 1.5" fill="none"/></svg>
<div class="a v hb" style="left:28px;top:210px;letter-spacing:.7px;font-size:12px">Game Menu</div>
<svg class="a" style="left:41px;top:226px" width="7" height="7" viewBox="0 0 7 7"><path d="M0.6 0.6L3.1 3.5L0.6 6.4M3.1 0.6L5.6 3.5L3.1 6.4" fill="none" stroke="#4d8fe0" stroke-width="1.15"/></svg>
<div class="a v" style="left:51px;top:223px;">News</div>
<svg class="a" style="left:41px;top:239px" width="7" height="7" viewBox="0 0 7 7"><path d="M0.6 0.6L3.1 3.5L0.6 6.4M3.1 0.6L5.6 3.5L3.1 6.4" fill="none" stroke="#4d8fe0" stroke-width="1.15"/></svg>
<div class="a v lk" style="left:51px;top:236px;">Battles</div>
<svg class="a" style="left:41px;top:252px" width="7" height="7" viewBox="0 0 7 7"><path d="M0.6 0.6L3.1 3.5L0.6 6.4M3.1 0.6L5.6 3.5L3.1 6.4" fill="none" stroke="#4d8fe0" stroke-width="1.15"/></svg>
<div class="a v lk" style="left:51px;top:249px;">Character</div>
<svg class="a" style="left:41px;top:265px" width="7" height="7" viewBox="0 0 7 7"><path d="M0.6 0.6L3.1 3.5L0.6 6.4M3.1 0.6L5.6 3.5L3.1 6.4" fill="none" stroke="#4d8fe0" stroke-width="1.15"/></svg>
<div class="a v" style="left:51px;top:262px;">Creatures</div>
<svg class="a" style="left:41px;top:278px" width="7" height="7" viewBox="0 0 7 7"><path d="M0.6 0.6L3.1 3.5L0.6 6.4M3.1 0.6L5.6 3.5L3.1 6.4" fill="none" stroke="#4d8fe0" stroke-width="1.15"/></svg>
<div class="a v" style="left:51px;top:275px;">Items</div>
<svg class="a" style="left:41px;top:291px" width="7" height="7" viewBox="0 0 7 7"><path d="M0.6 0.6L3.1 3.5L0.6 6.4M3.1 0.6L5.6 3.5L3.1 6.4" fill="none" stroke="#4d8fe0" stroke-width="1.15"/></svg>
<div class="a v" style="left:51px;top:288px;">Amulets</div>
<svg class="a" style="left:41px;top:304px" width="7" height="7" viewBox="0 0 7 7"><path d="M0.6 0.6L3.1 3.5L0.6 6.4M3.1 0.6L5.6 3.5L3.1 6.4" fill="none" stroke="#4d8fe0" stroke-width="1.15"/></svg>
<div class="a v lk" style="left:51px;top:301px;">Spellbook</div>
<svg class="a" style="left:41px;top:317px" width="7" height="7" viewBox="0 0 7 7"><path d="M0.6 0.6L3.1 3.5L0.6 6.4M3.1 0.6L5.6 3.5L3.1 6.4" fill="none" stroke="#4d8fe0" stroke-width="1.15"/></svg>
<div class="a v" style="left:51px;top:314px;">Buildings</div>
<svg class="a" style="left:41px;top:330px" width="7" height="7" viewBox="0 0 7 7"><path d="M0.6 0.6L3.1 3.5L0.6 6.4M3.1 0.6L5.6 3.5L3.1 6.4" fill="none" stroke="#4d8fe0" stroke-width="1.15"/></svg>
<div class="a v" style="left:51px;top:327px;">Defense</div>
<svg class="a" style="left:41px;top:349px" width="7" height="7" viewBox="0 0 7 7"><path d="M0.6 0.6L3.1 3.5L0.6 6.4M3.1 0.6L5.6 3.5L3.1 6.4" fill="none" stroke="#4d8fe0" stroke-width="1.15"/></svg>
<div class="a v" style="left:51px;top:346px;">Your Kingdom</div>
<svg class="a" style="left:41px;top:362px" width="7" height="7" viewBox="0 0 7 7"><path d="M0.6 0.6L3.1 3.5L0.6 6.4M3.1 0.6L5.6 3.5L3.1 6.4" fill="none" stroke="#4d8fe0" stroke-width="1.15"/></svg>
<div class="a v" style="left:60px;top:359px;">Pub</div>
<svg class="a" style="left:41px;top:375px" width="7" height="7" viewBox="0 0 7 7"><path d="M0.6 0.6L3.1 3.5L0.6 6.4M3.1 0.6L5.6 3.5L3.1 6.4" fill="none" stroke="#4d8fe0" stroke-width="1.15"/></svg>
<div class="a v" style="left:60px;top:372px;">Marketplace</div>
<svg class="a" style="left:41px;top:388px" width="7" height="7" viewBox="0 0 7 7"><path d="M0.6 0.6L3.1 3.5L0.6 6.4M3.1 0.6L5.6 3.5L3.1 6.4" fill="none" stroke="#4d8fe0" stroke-width="1.15"/></svg>
<div class="a v" style="left:60px;top:385px;">Post Office</div>
<svg class="a" style="left:41px;top:401px" width="7" height="7" viewBox="0 0 7 7"><path d="M0.6 0.6L3.1 3.5L0.6 6.4M3.1 0.6L5.6 3.5L3.1 6.4" fill="none" stroke="#4d8fe0" stroke-width="1.15"/></svg>
<div class="a v" style="left:60px;top:398px;">Town Hall</div>
<svg class="a" style="left:41px;top:414px" width="7" height="7" viewBox="0 0 7 7"><path d="M0.6 0.6L3.1 3.5L0.6 6.4M3.1 0.6L5.6 3.5L3.1 6.4" fill="none" stroke="#4d8fe0" stroke-width="1.15"/></svg>
<div class="a v" style="left:60px;top:411px;">War Room</div>
<svg class="a" style="left:41px;top:427px" width="7" height="7" viewBox="0 0 7 7"><path d="M0.6 0.6L3.1 3.5L0.6 6.4M3.1 0.6L5.6 3.5L3.1 6.4" fill="none" stroke="#4d8fe0" stroke-width="1.15"/></svg>
<div class="a v" style="left:60px;top:424px;">Gem Temple</div>
<svg class="a" style="left:41px;top:440px" width="7" height="7" viewBox="0 0 7 7"><path d="M0.6 0.6L3.1 3.5L0.6 6.4M3.1 0.6L5.6 3.5L3.1 6.4" fill="none" stroke="#4d8fe0" stroke-width="1.15"/></svg>
<div class="a v" style="left:60px;top:437px;">Gem Shrine</div>
<svg class="a" style="left:41px;top:453px" width="7" height="7" viewBox="0 0 7 7"><path d="M0.6 0.6L3.1 3.5L0.6 6.4M3.1 0.6L5.6 3.5L3.1 6.4" fill="none" stroke="#4d8fe0" stroke-width="1.15"/></svg>
<div class="a v" style="left:60px;top:450px;">Buildings</div>
<svg class="a" style="left:41px;top:466px" width="7" height="7" viewBox="0 0 7 7"><path d="M0.6 0.6L3.1 3.5L0.6 6.4M3.1 0.6L5.6 3.5L3.1 6.4" fill="none" stroke="#4d8fe0" stroke-width="1.15"/></svg>
<div class="a v" style="left:60px;top:463px;">Vault</div>
<svg class="a" style="left:41px;top:479px" width="7" height="7" viewBox="0 0 7 7"><path d="M0.6 0.6L3.1 3.5L0.6 6.4M3.1 0.6L5.6 3.5L3.1 6.4" fill="none" stroke="#4d8fe0" stroke-width="1.15"/></svg>
<div class="a v" style="left:60px;top:476px;">Archive</div>
<svg class="a" style="left:41px;top:492px" width="7" height="7" viewBox="0 0 7 7"><path d="M0.6 0.6L3.1 3.5L0.6 6.4M3.1 0.6L5.6 3.5L3.1 6.4" fill="none" stroke="#4d8fe0" stroke-width="1.15"/></svg>
<div class="a v" style="left:60px;top:489px;">Alliance</div>
<svg class="a" style="left:41px;top:511px" width="7" height="7" viewBox="0 0 7 7"><path d="M0.6 0.6L3.1 3.5L0.6 6.4M3.1 0.6L5.6 3.5L3.1 6.4" fill="none" stroke="#4d8fe0" stroke-width="1.15"/></svg>
<div class="a v" style="left:51px;top:508px;">Other Players</div>
<svg class="a" style="left:41px;top:524px" width="7" height="7" viewBox="0 0 7 7"><path d="M0.6 0.6L3.1 3.5L0.6 6.4M3.1 0.6L5.6 3.5L3.1 6.4" fill="none" stroke="#4d8fe0" stroke-width="1.15"/></svg>
<div class="a v" style="left:51px;top:521px;">Other Kingdoms</div>
<svg class="a" style="left:41px;top:537px" width="7" height="7" viewBox="0 0 7 7"><path d="M0.6 0.6L3.1 3.5L0.6 6.4M3.1 0.6L5.6 3.5L3.1 6.4" fill="none" stroke="#4d8fe0" stroke-width="1.15"/></svg>
<div class="a v" style="left:51px;top:534px;">Trade Requests</div>
<svg class="a" style="left:41px;top:550px" width="7" height="7" viewBox="0 0 7 7"><path d="M0.6 0.6L3.1 3.5L0.6 6.4M3.1 0.6L5.6 3.5L3.1 6.4" fill="none" stroke="#4d8fe0" stroke-width="1.15"/></svg>
<div class="a v" style="left:51px;top:547px;">Battle Calculator</div>
<svg class="a" style="left:41px;top:563px" width="7" height="7" viewBox="0 0 7 7"><path d="M0.6 0.6L3.1 3.5L0.6 6.4M3.1 0.6L5.6 3.5L3.1 6.4" fill="none" stroke="#4d8fe0" stroke-width="1.15"/></svg>
<div class="a v" style="left:51px;top:560px;">IRC Chat</div>
<svg class="a" style="left:41px;top:576px" width="7" height="7" viewBox="0 0 7 7"><path d="M0.6 0.6L3.1 3.5L0.6 6.4M3.1 0.6L5.6 3.5L3.1 6.4" fill="none" stroke="#4d8fe0" stroke-width="1.15"/></svg>
<div class="a v" style="left:51px;top:573px;">Lore</div>
<svg class="a" style="left:41px;top:589px" width="7" height="7" viewBox="0 0 7 7"><path d="M0.6 0.6L3.1 3.5L0.6 6.4M3.1 0.6L5.6 3.5L3.1 6.4" fill="none" stroke="#4d8fe0" stroke-width="1.15"/></svg>
<div class="a v" style="left:51px;top:586px;">Rodia</div>
<svg class="a" style="left:41px;top:602px" width="7" height="7" viewBox="0 0 7 7"><path d="M0.6 0.6L3.1 3.5L0.6 6.4M3.1 0.6L5.6 3.5L3.1 6.4" fill="none" stroke="#4d8fe0" stroke-width="1.15"/></svg>
<div class="a v" style="left:51px;top:599px;">Travel</div>
<svg class="a" style="left:41px;top:615px" width="7" height="7" viewBox="0 0 7 7"><path d="M0.6 0.6L3.1 3.5L0.6 6.4M3.1 0.6L5.6 3.5L3.1 6.4" fill="none" stroke="#4d8fe0" stroke-width="1.15"/></svg>
<div class="a v" style="left:51px;top:612px;">Go to Regalis</div>
<div class="a v hb" style="left:28px;top:655px;letter-spacing:.7px;font-size:12px">Friends &nbsp;«</div>
<div class="a v" style="left:24px;width:80px;text-align:center;top:667px;font-size:10px;letter-spacing:1.2px;color:#4688d4">bot1336</div>
<div class="a v" style="left:86px;width:80px;text-align:center;top:667px;font-size:10px;letter-spacing:1.2px;color:#5c5c5c">Bot418</div>
<div class="a v" style="left:24px;width:80px;text-align:center;top:679px;font-size:10px;letter-spacing:1.2px;color:#4688d4">BOTerham</div>
<div class="a v" style="left:86px;width:80px;text-align:center;top:679px;font-size:10px;letter-spacing:1.2px;color:#5c5c5c">Buldozer</div>
<div class="a v" style="left:24px;width:80px;text-align:center;top:691px;font-size:10px;letter-spacing:1.2px;color:#4688d4">GamblingBot</div>
<div class="a v" style="left:86px;width:80px;text-align:center;top:691px;font-size:10px;letter-spacing:1.2px;color:#5c5c5c">C-3PO</div>
<div class="a v" style="left:24px;width:80px;text-align:center;top:703px;font-size:10px;letter-spacing:1.2px;color:#4688d4">Ladyscraper</div>
<div class="a v" style="left:86px;width:80px;text-align:center;top:703px;font-size:10px;letter-spacing:1.2px;color:#5c5c5c">Dalek</div>
<div class="a v" style="left:24px;width:80px;text-align:center;top:715px;font-size:10px;letter-spacing:1.2px;color:#4688d4">Skynet</div>
<div class="a v" style="left:86px;width:80px;text-align:center;top:715px;font-size:10px;letter-spacing:1.2px;color:#5c5c5c">Kirito</div>
<div class="a v" style="left:24px;width:80px;text-align:center;top:727px;font-size:10px;letter-spacing:1.2px;color:#5c5c5c">Alpha</div>
<div class="a v" style="left:86px;width:80px;text-align:center;top:727px;font-size:10px;letter-spacing:1.2px;color:#5c5c5c">Nao</div>
<div class="a v" style="left:24px;width:80px;text-align:center;top:739px;font-size:10px;letter-spacing:1.2px;color:#5c5c5c">Android_17</div>
<div class="a v" style="left:86px;width:80px;text-align:center;top:739px;font-size:10px;letter-spacing:1.2px;color:#5c5c5c">T-1000</div>
<div class="a v" style="left:24px;width:80px;text-align:center;top:751px;font-size:10px;letter-spacing:1.2px;color:#5c5c5c">Baymax</div>
<div class="a v" style="left:86px;width:80px;text-align:center;top:751px;font-size:10px;letter-spacing:1.2px;color:#5c5c5c">VWXYZ</div>
<div class="a v" style="left:24px;width:80px;text-align:center;top:763px;font-size:10px;letter-spacing:1.2px;color:#5c5c5c">BenderWise</div>
<div class="a v" style="left:86px;width:80px;text-align:center;top:763px;font-size:10px;letter-spacing:1.2px;color:#5c5c5c">WALL-E</div>
<div class="a v lk" style="left:22px;width:136px;text-align:center;top:781px">Add</div>
<div class="a v hb" style="left:28px;top:824px;letter-spacing:.7px;font-size:12px">Enemies &nbsp;«</div>
<div class="a v" style="left:16px;width:80px;text-align:center;top:836px;font-size:10px;letter-spacing:1.2px;color:#4688d4">Watto</div>
<div class="a v" style="left:78px;width:80px;text-align:center;top:836px;font-size:10px;letter-spacing:1.2px;color:#5c5c5c">MyLittleP</div>
<div class="a v" style="left:16px;width:80px;text-align:center;top:848px;font-size:10px;letter-spacing:1.2px;color:#5c5c5c">aldi</div>
<div class="a v" style="left:78px;width:80px;text-align:center;top:848px;font-size:10px;letter-spacing:1.2px;color:#5c5c5c">Obi-Wan</div>
<div class="a v" style="left:16px;width:80px;text-align:center;top:860px;font-size:10px;letter-spacing:1.2px;color:#5c5c5c">Baron</div>
<div class="a v" style="left:78px;width:80px;text-align:center;top:860px;font-size:10px;letter-spacing:1.2px;color:#5c5c5c">Panter</div>
<div class="a v" style="left:16px;width:80px;text-align:center;top:872px;font-size:10px;letter-spacing:1.2px;color:#5c5c5c">Bottle</div>
<div class="a v" style="left:78px;width:80px;text-align:center;top:872px;font-size:10px;letter-spacing:1.2px;color:#5c5c5c">PornStache</div>
<div class="a v" style="left:16px;width:80px;text-align:center;top:884px;font-size:10px;letter-spacing:1.2px;color:#5c5c5c">Bumba</div>
<div class="a v" style="left:78px;width:80px;text-align:center;top:884px;font-size:10px;letter-spacing:1.2px;color:#5c5c5c">Qui-</div>
<div class="a v" style="left:16px;width:80px;text-align:center;top:896px;font-size:10px;letter-spacing:1.2px;color:#5c5c5c">Grievous</div>
<div class="a v" style="left:78px;width:80px;text-align:center;top:896px;font-size:10px;letter-spacing:1.2px;color:#5c5c5c">Gon_Jin</div>
<div class="a v" style="left:16px;width:80px;text-align:center;top:908px;font-size:10px;letter-spacing:1.2px;color:#5c5c5c"></div>
<div class="a v" style="left:78px;width:80px;text-align:center;top:908px;font-size:10px;letter-spacing:1.2px;color:#5c5c5c">Smokey007</div>
<div class="a v lk" style="left:22px;width:134px;text-align:center;top:925px">Add</div>
<div class="a v hb" style="left:28px;top:968px;letter-spacing:.7px;font-size:12px">Server</div>
<div class="a v lk" style="left:28px;top:982px;">Online players: 15</div>
<div class="a v hb" style="left:28px;top:1026px;letter-spacing:.7px;font-size:12px">Other Links</div>
<div class="a v hb" style="left:200px;top:210px;letter-spacing:.7px;font-size:12px">News</div>
<div class="a v" style="left:219px;top:223px;">2015-10-19</div>
<div class="a v lk" style="left:391px;top:223px;">Battles: battle report vs Watto</div>
<div class="a v" style="left:219px;top:236px;">2015-10-19</div>
<div class="a v lk" style="left:391px;top:236px;">Battles: battle report vs Baron</div>
<div class="a v" style="left:219px;top:249px;">2015-10-19</div>
<div class="a v lk" style="left:391px;top:249px;">Battles: battle report vs MyLittleP</div>
<div class="a v" style="left:219px;top:262px;">2015-10-19</div>
<div class="a v lk" style="left:391px;top:262px;">Battles: battle report vs Xizor</div>
<div class="a v" style="left:219px;top:275px;">2015-10-19</div>
<div class="a v lk" style="left:391px;top:275px;">Battles: battle report vs Xizor</div>
<div class="a v" style="left:219px;top:288px;">2015-10-19</div>
<div class="a v lk" style="left:391px;top:288px;">Battles: battle report vs Xizor</div>
<div class="a v hb" style="left:1148px;top:210px;letter-spacing:.7px;font-size:12px">Resources</div>
<div class="a v" style="left:1160px;top:223px;">Brimstone: 5610</div>
<div class="a v" style="left:1160px;top:236px;">Crystal: 5610</div>
<div class="a v" style="left:1160px;top:249px;">Essence: 31225</div>
<div class="a v" style="left:1160px;top:262px;">Granite: 2856</div>
<div class="a v" style="left:1160px;top:275px;">Power: 829</div>
<div class="a v" style="left:1160px;top:288px;">Power Balance: 200%</div>
<div class="a v hb" style="left:200px;top:335px;letter-spacing:.7px;font-size:12px">Battles</div>
<div class="a v" style="left:200px;top:348px;">Battle fought! (<span class="lk">counter attack</span>)</div>
<div class="a v" style="left:200px;top:389px;width:1225px;height:13px;color:#767676;border-bottom:1px dashed #666">Report</div>
<div class="a v" style="left:237px;top:413px;">You gained 753 experience and 0% power balance.</div>
<div class="a v" style="left:200px;top:441px;width:1225px;height:13px;color:#767676;border-bottom:1px dashed #666">Incoming Battles</div>
<div class="a v" style="left:237px;top:465px;"><span class="lk">automaton188</span> is attacking us with 1 visible creature. <span class="lk">Defend</span>. Time left: 23:59.</div>
<div class="a v" style="left:237px;top:491px;">You have to defend the battles in the order they arrive (first one is on top).</div>
<div class="a v" style="left:237px;top:504px;">Once you click on defend, you have to defend within one hour!</div>
<div class="a v" style="left:200px;top:532px;width:1225px;height:13px;color:#767676;border-bottom:1px dashed #666">Outgoing Battles</div>
<div class="a v" style="left:237px;top:556px;">We are attacking <span style="color:#6a6a6a">Obi-Wan</span>. <span style="color:#6a6a6a">Battle info</span>. Time left: 23:13.</div>
<div class="a v" style="left:237px;top:569px;">We are attacking <span style="color:#6a6a6a">Obi-Wan</span>. <span style="color:#6a6a6a">Battle info</span>. Time left: 23:13.</div>
<div class="a v" style="left:237px;top:582px;">We are attacking <span style="color:#6a6a6a">Panter</span>. <span style="color:#6a6a6a">Battle info</span>. Time left: 23:13.</div>
<div class="a v" style="left:237px;top:595px;">We are attacking <span style="color:#6a6a6a">Bumba</span>. <span style="color:#6a6a6a">Battle info</span>. Time left: 23:56.</div>
<div class="a v" style="left:200px;top:623px;width:1225px;height:13px;color:#767676;border-bottom:1px dashed #666">Incoming Battle Reports</div>
<div class="a v" style="left:237px;top:647px;"><span class="lk">Incoming battle report</span> vs <span class="lk">automaton161</span> (2015-10-19).</div>
<div class="a v" style="left:237px;top:660px;"><span class="lk">Incoming battle report</span> vs <span class="lk">Bloodworm</span> (2015-10-19).</div>
<div class="a v" style="left:237px;top:673px;"><span class="lk">Incoming battle report</span> vs <span class="lk">Bloodworm</span> (2015-10-19).</div>
<div class="a v" style="left:237px;top:686px;"><span class="lk">Incoming battle report</span> vs <span class="lk">Ladyscraper</span> (2015-10-19).</div>
<div class="a v" style="left:237px;top:699px;"><span class="lk">Incoming battle report</span> vs <span class="lk">Ladyscraper</span> (2015-10-19).</div>
<div class="a v" style="left:237px;top:725px;"><span class="lk">next</span></div>
<div class="a v" style="left:200px;top:753px;width:1225px;height:13px;color:#767676;border-bottom:1px dashed #666">Outgoing Battle Reports</div>
<div class="a v" style="left:237px;top:777px;"><span class="lk">Outgoing battle report</span> vs <span class="lk">Watto</span> (2015-10-19).</div>
<div class="a v" style="left:237px;top:790px;"><span class="lk">Outgoing battle report</span> vs <span class="lk">Baron</span> (2015-10-19).</div>
<div class="a v" style="left:237px;top:803px;"><span class="lk">Outgoing battle report</span> vs <span class="lk">MyLittleP</span> (2015-10-19).</div>
<div class="a v" style="left:237px;top:816px;"><span class="lk">Outgoing battle report</span> vs <span class="lk">Xizor</span> (2015-10-19).</div>
<div class="a v" style="left:237px;top:829px;"><span class="lk">Outgoing battle report</span> vs <span class="lk">Xizor</span> (2015-10-19).</div>
<div class="a v" style="left:237px;top:855px;"><span class="lk">next</span></div>
<div class="a v" style="left:200px;top:883px;width:1225px;height:13px;color:#767676;border-bottom:1px dashed #666">Attack</div>
<div class="a v" style="left:475px;top:911px;">Target:</div>
<div class="a" style="left:691px;top:908px;width:118px;height:17px;background:#070707;border:1px solid #5a5a5a;border-radius:2px"></div>
<div class="a v lk" style="left:691px;top:930px;width:50px;height:16px;border:1px solid #5a5a5a;border-radius:2px;text-align:center;line-height:14px;background:#050505">Attack</div>
</div>
<div class="a" style="left:1444px;top:87px;width:16px;height:941px;background:#f1f1f1"></div>
<div class="a" style="left:1446px;top:102px;width:11px;height:738px;background:#bdbdbd"></div>
<svg class="a" style="left:1446px;top:90px" width="12" height="8"><path d="M1 7L6 2L11 7Z" fill="#a8a8a8"/></svg>
<svg class="a" style="left:1446px;top:1016px" width="12" height="8"><path d="M1 1L6 6L11 1Z" fill="#505050"/></svg>
<div class="a" style="left:8px;top:1028px;width:1452px;height:16px;background:#f1f1f1"></div>
<div class="a" style="left:22px;top:1030px;width:1371px;height:10px;background:#bdbdbd"></div>
<svg class="a" style="left:11px;top:1030px" width="8" height="12"><path d="M7 1L2 6L7 11Z" fill="#a8a8a8"/></svg>
<svg class="a" style="left:1432px;top:1030px" width="8" height="12"><path d="M1 1L6 6L1 11Z" fill="#505050"/></svg>
<div class="a" style="left:1563px;top:1039px;width:1000px;height:14px;background:#f2f2f2;border-top:1px solid #000"></div>
<div class="a" style="left:1563px;top:1048px;width:1000px;height:5px;background:#ececec;border-top:1px solid #000;border-bottom:1px solid #000"></div>
<div class="a" style="left:1563px;top:1039px;width:2px;height:14px;background:#000"></div>
<div class="a" style="left:1486px;top:0;width:1px;height:1040px;background:#1e1e1e"></div>
<div class="a" style="left:1487px;top:0;width:1073px;height:1039px;background:linear-gradient(#cacaca,#bdbdbd 14px,#bebebe);border-top:1px solid #333;border-left:3px solid #c4c4c4"></div>
<div class="a" style="left:1489px;top:40px;width:1px;height:996px;background:#8a8a8a"></div>
<svg class="a" style="left:1497px;top:17px" width="206" height="24" viewBox="0 0 206 24"><path d="M0 24.5C5 24.5 7 21 8.5 17L12.5 4C13.5 1.5 15 0.5 18 0.5H188C191 0.5 192.5 1.5 193.5 4L197.5 17C199 21 201 24.5 206 24.5Z" fill="#eceae8" stroke="#8a8a8a" stroke-width="1"/><path d="M2 24C6 23.5 8 20.5 9.5 17L13.5 4.5C14.5 2.2 16 1.5 18 1.5H188C190 1.5 191.5 2.2 192.5 4.5L196.5 17" fill="none" stroke="#fff" stroke-width="1"/></svg>
<svg class="a" style="left:1513px;top:21px" width="13" height="16"><path d="M1.5 1.5h6.5l3.5 3.5v9.5h-10z M8 1.5v3.5h3.5" fill="#fff" stroke="#888"/></svg>
<div class="a" style="left:1531px;top:19px;font-size:17px;line-height:20px;color:#2e2e2e;white-space:nowrap;width:128px;overflow:hidden;-webkit-mask-image:linear-gradient(90deg,#000 82%,transparent)">Ahruna-helper: a simple</div>
<svg class="a" style="left:1675px;top:23px" width="12" height="12"><path d="M2 2L10 10M10 2L2 10" stroke="#333" stroke-width="2"/></svg>
<svg class="a" style="left:1696px;top:21px" width="34" height="16" viewBox="0 0 34 16"><path d="M1.5 1.5H24C25.5 1.5 26.5 2.2 27 3.5L32 13C32.5 14 32 14.5 31 14.5H9C7.8 14.5 7 14 6.5 13L1 2.5C0.8 1.8 1 1.5 1.5 1.5Z" fill="#b9c8dc" stroke="#8a96a8" stroke-width="1"/></svg>
<div class="a" style="left:1490px;top:40px;width:1070px;height:38px;background:linear-gradient(#f2f1f0,#edeceb);border-bottom:1px solid #c9c9c9"></div>
<svg class="a" style="left:1489px;top:40px" width="30" height="36" viewBox="0 0 30 36"><path d="M18.5 11.5L9.5 18.5L18.5 25.5" fill="none" stroke="#a2a2a2" stroke-width="5.6" stroke-linecap="round" stroke-linejoin="round"/><path d="M18.5 11.5L9.5 18.5L18.5 25.5" fill="none" stroke="#f6f6f6" stroke-width="3.2" stroke-linecap="round" stroke-linejoin="round"/><circle cx="18.4" cy="18.3" r="2.3" fill="#fafafa" stroke="#a0a0a0" stroke-width="1.3"/><circle cx="24.5" cy="18.3" r="2.3" fill="#fafafa" stroke="#a0a0a0" stroke-width="1.3"/></svg>
<svg class="a" style="left:1519px;top:40px" width="30" height="36" viewBox="0 0 30 36"><path d="M14 11.5L23 18.5L14 25.5" fill="none" stroke="#d0d0d0" stroke-width="5.6" stroke-linecap="round" stroke-linejoin="round"/><path d="M14 11.5L23 18.5L14 25.5" fill="none" stroke="#f2f2f2" stroke-width="3.2" stroke-linecap="round" stroke-linejoin="round"/><circle cx="8" cy="18.3" r="2.3" fill="#f0f0f0" stroke="#d6d6d6" stroke-width="1.3"/><circle cx="14" cy="18.3" r="2.3" fill="#f0f0f0" stroke="#d6d6d6" stroke-width="1.3"/></svg>
<svg class="a" style="left:1549px;top:40px" width="30" height="36" viewBox="0 0 30 36"><path d="M21.5 22A7.3 7.3 0 1 1 19.5 13" fill="none" stroke="#a2a2a2" stroke-width="5.4" stroke-linecap="round"/><path d="M21.5 22A7.3 7.3 0 1 1 19.5 13" fill="none" stroke="#f6f6f6" stroke-width="3" stroke-linecap="round"/><path d="M15.5 10.2L24.2 10.2L24.2 18.5Z" fill="#f6f6f6" stroke="#a2a2a2" stroke-width="1.2" stroke-linejoin="round"/></svg>
<div class="a" style="left:1585px;top:46px;width:980px;height:27px;background:#fff;border:1px solid #c2c2c2;border-radius:2px"></div>
<svg class="a" style="left:1592px;top:51px" width="13" height="16"><path d="M1.5 1.5h6.5l3.5 3.5v9.5h-10z M8 1.5v3.5h3.5" fill="#fff" stroke="#777"/></svg>
<div class="a" style="left:1611px;top:49px;font-size:17px;line-height:20px;white-space:pre;color:#222;letter-spacing:.45px">192.168.2.152<span style="color:#8a8a8a">/ahruna-helper-git/?cls=divTravelCalc</span></div>
<div class="a" style="left:1490px;top:78px;width:1070px;height:943px;background:#fff"></div>
<div class="a" style="left:1490px;top:78px;width:1070px;height:69px;background:#ececec"></div>
<div class="a" style="left:1490px;top:147px;width:1070px;height:11px;background:#bdbdbd"></div>
<div class="a" style="font-family:'Liberation Sans',sans-serif;white-space:pre;color:#111;left:1491px;top:78px;font-size:13.7px;line-height:17px;font-weight:bold">Welcome Marbug,</div>
<div class="a" style="left:1517px;top:110px;width:5px;height:5px;background:#111"></div>
<div class="a" style="font-family:'Liberation Sans',sans-serif;white-space:pre;color:#111;left:1531px;top:104px;font-size:14px;line-height:16px;">Filling Orbs</div>
<div class="a" style="left:1517px;top:124px;width:5px;height:5px;background:#111"></div>
<div class="a" style="font-family:'Liberation Sans',sans-serif;white-space:pre;color:#111;left:1531px;top:118px;font-size:14px;line-height:16px;">Travel Calculater</div>
<div class="a" style="left:1517px;top:138px;width:5px;height:5px;background:#111"></div>
<div class="a" style="font-family:'Liberation Sans',sans-serif;white-space:pre;color:#111;left:1531px;top:132px;font-size:14px;line-height:16px;text-decoration:underline">Logout</div>
<div class="a" style="font-family:'Liberation Sans',sans-serif;white-space:pre;color:#111;left:1521px;top:188px;font-size:14px;line-height:16px">Defenders:</div>
<div class="a" style="left:1520px;top:203px;width:982px;height:306px;border:1px solid #a9a9a9;background:#fff;overflow:hidden"></div>
<div class="a m" style="left:1524px;top:207px;height:300px;overflow:hidden">1. Fright       Cursed Being/Diabolic, passive  L17     412/895 N35/D110/M0/E35 Blank Gem (63.2%)
2. Fiendish Spectre     Spectre/Diabolic, passive       L20     576/1200        N70/D100/M0/E30 Ghostly Touch
3. Fright       Cursed Being/Diabolic, passive  L20     470/1022        N35/D110/M0/E35 Frightning Link
4. Fright       Cursed Being/Diabolic, passive  L20     470/1022        N35/D110/M0/E35 Frightning Link
5. Fright       Cursed Being/Diabolic, passive  L20     470/1022        N35/D110/M0/E35 Frightning Link
6. Fright       Cursed Being/Diabolic, passive  L20     470/1022        N35/D110/M0/E35 Frightning Link
7. Fright       Cursed Being/Diabolic, passive  L20     470/1022        N35/D110/M0/E35 Frightning Link
8. Fright       Cursed Being/Diabolic, passive  L20     470/1022        N35/D110/M0/E35 Frightning Link
9. Fright       Cursed Being/Diabolic, passive  L20     470/1022        N35/D110/M0/E35 Frightning Link
10. Fright      Cursed Being/Diabolic, passive  L20     470/1022        N35/D110/M0/E35 Frightning Link
11. Fright      Cursed Being/Diabolic, passive  L20     470/1022        N35/D110/M0/E35 Frightning Link
12. Fright      Cursed Being/Diabolic, passive  L20     470/1022        N35/D110/M0/E35 Frightning Link
13. Fright      Cursed Being/Diabolic, passive  L20     470/1022        N35/D110/M0/E35 Frightning Link
14. Fright      Cursed Being/Diabolic, passive  L20     470/1022        N35/D110/M0/E35 Frightning Link
15. Fright      Cursed Being/Diabolic, passive  L20     470/1022        N35/D110/M0/E35 Frightning Link
16. Fright      Cursed Being/Diabolic, passive  L20     470/1022        N35/D110/M0/E35 Frightning Link
17. Fright      Cursed Being/Diabolic, passive  L20     470/1022        N35/D110/M0/E35 Frightning Link
18. Fright      Cursed Being/Diabolic, passive  L20     470/1022        N35/D110/M0/E35 Frightning Link
19. Fright      Cursed Being/Diabolic, passive  L20     470/1022        N35/D110/M0/E35 Frightning Link
20. Fright      Cursed Being/Diabolic, passive  L20     470/1022        N35/D110/M0/E35 Frightning Link
21. Fright      Cursed Being/Diabolic, passive  L20     470/1022        N35/D110/M0/E35 Frightning Link</div>
<div class="a" style="left:2486px;top:204px;width:15px;height:304px;background:#f1f1f1"></div>
<div class="a" style="left:2488px;top:218px;width:11px;height:181px;background:#bdbdbd"></div>
<svg class="a" style="left:2488px;top:207px" width="11" height="8"><path d="M1 7L5.5 2L10 7Z" fill="#a8a8a8"/></svg>
<svg class="a" style="left:2488px;top:483px" width="11" height="8"><path d="M1 1L5.5 6L10 1Z" fill="#505050"/></svg>
<svg class="a" style="left:2492px;top:498px" width="9" height="9"><path d="M8 2L2 8M8 5L5 8" stroke="#888" stroke-width="1"/></svg>
<div class="a" style="font-family:'Liberation Sans',sans-serif;white-space:pre;color:#111;left:1521px;top:508px;font-size:14px;line-height:16px">Attackers:</div>
<div class="a" style="left:1904px;top:523px;width:700px;height:306px;border:1px solid #a9a9a9;background:#fff"></div>
<div class="a m" style="left:1907px;top:527px;width:653px;overflow:hidden">There are 14 creatures attacking you.
Enter the number of one of your creatures in each field and press the defend button
  Troll Master  Troll/Nature, passive   L4      184/4104        N100/D0/M20/E80
  Troll Master  Troll/Nature, passive   L4      184/414 N100/D0/M20/E80
  Troll Master  Troll/Nature, passive   L4      184/414 N100/D0/M20/E80
  Troll Master  Troll/Nature, passive   L4      184/414 N100/D0/M20/E80
  Troll Master  Troll/Nature, passive   L4      184/414 N100/D0/M20/E80
  Troll Master  Troll/Nature, passive   L4      184/414 N100/D0/M20/E80
  Troll Master  Troll/Nature, passive   L4      184/414 N100/D0/M20/E80
  Brisk Manticore       Manticore/Mystic, passive       L2      91/162  N65/D40/M15/E60
  Brisk Manticore       Manticore/Mystic, passive       L2      91/162  N65/D40/M15/E60
  Brisk Manticore       Manticore/Mystic, passive       L2      91/162  N65/D40/M15/E60
  Brisk Manticore       Manticore/Mystic, passive       L2      91/162  N65/D40/M15/E60
  Brisk Manticore       Manticore/Mystic, passive       L2      91/162  N65/D40/M15/E60
  Brisk Manticore       Manticore/Mystic, passive       L2      91/162  N65/D40/M15/E60
  Brisk Manticore       Manticore/Mystic, passive       L2      91/162  N65/D40/M15/E60</div>
<div class="a" style="font-family:'Liberation Sans',sans-serif;white-space:pre;color:#111;left:1521px;top:816px;font-size:14px;line-height:16px;letter-spacing:.1px">// TODO onpaste does submit the previous value of the field</div>
<div class="a" style="left:1521px;top:832px;width:70px;height:21px;border:1px solid #a9a9a9;border-radius:2px;background:linear-gradient(#fafafa,#e2e2e2);font-family:'Liberation Sans',sans-serif;white-space:pre;color:#111;font-size:13px;line-height:19px;text-align:center">Calculate</div>
<div class="a" style="left:1521px;top:859px;width:1040px;height:2px;border-top:1px solid #9a9a9a;border-bottom:1px solid #eee"></div>
<div class="a" style="left:1521px;top:867px;width:1040px;height:2px;border-top:1px solid #9a9a9a;border-bottom:1px solid #eee"></div>
<div class="a" style="left:1521px;top:881px;height:140px;overflow:hidden;font-family:'Liberation Mono',monospace;font-size:11.67px;line-height:14px;white-space:pre;color:#111">attacking crits death: 13
defending crits died: 1
both dies: 0
exhausted: 0
<span style="color:#c8252b">1. Fright       Cursed Being lvl 17 dmg/health 412/895 (defence: 35%)
attacker: Troll Master  Troll lvl 4 dmg/health 184/4104 (defence: 0%)
        defender         attacker
    683 412->618     3486 184->211
    471 412->618     2868 184->211
    260 412->618     2250 184->211
    152 412->618     1632 184->211</span></div>
<div class="a" style="left:1490px;top:1021px;width:1070px;height:15px;background:#f1f1f1"></div>
<div class="a" style="left:1504px;top:1022px;width:1060px;height:10px;background:#bdbdbd"></div>
<svg class="a" style="left:1493px;top:1022px" width="8" height="12"><path d="M7 1L2 6L7 11Z" fill="#a8a8a8"/></svg>
<div class="a" style="left:1490px;top:1036px;width:1070px;height:3px;background:#a9a9a9"></div>
<div class="a" style="left:0;top:1053px;width:2490px;height:27px;background:linear-gradient(90deg,#7e4a22 0,#6a4024 60px,#4e3624 300px,#4a3424 2480px)"></div>
<div class="a" style="left:71px;top:1053px;width:237px;height:30px;border:1px solid #b8a68a;border-bottom:none;background:#3f3025"></div>
<div class="a" style="left:315px;top:1053px;width:237px;height:30px;border:1px solid #b8a68a;border-bottom:none;background:#3f3025"></div>
<div class="a" style="left:558px;top:1053px;width:237px;height:30px;border:1px solid #b8a68a;border-bottom:none;background:#3f3025"></div>
<div class="a" style="left:802px;top:1053px;width:236px;height:30px;border:1px solid #b8a68a;border-bottom:none;background:#3f3025"></div>
<div class="a" style="left:1045px;top:1053px;width:236px;height:30px;border:1px solid #b8a68a;border-bottom:none;background:#3f3025"></div>
<div class="a" style="left:1285px;top:1053px;width:239px;height:30px;border:1px solid #b8a68a;border-bottom:none;background:#3f3025"></div>
<div class="a" style="left:1530px;top:1053px;width:237px;height:30px;border:1px solid #b8a68a;border-bottom:none;background:#3f3025"></div>
<div class="a" style="left:1774px;top:1053px;width:236px;height:30px;border:1px solid #b8a68a;border-bottom:none;background:#3f3025"></div>
<div class="a" style="left:2017px;top:1053px;width:236px;height:30px;border:1px solid #b8a68a;border-bottom:none;background:#3f3025"></div>
<div class="a" style="left:2260px;top:1053px;width:132px;height:30px;border:1px solid #b8a68a;border-bottom:none;background:#3f3025"></div>
<div class="a" style="left:2399px;top:1053px;width:89px;height:30px;border:1px solid #b8a68a;border-bottom:none;background:#3f3025"></div>
<div class="a" style="left:72px;top:1054px;width:40px;height:26px;background:rgba(160,150,140,.35)"></div>
<svg class="a" style="left:81px;top:1056px" width="22" height="22" viewBox="0 0 22 22"><circle cx="11" cy="11" r="10" fill="#a9c4e4"/><path d="M11 1A10 10 0 0 1 20 7L11 7Z" fill="#c9dcf0"/><circle cx="11" cy="11" r="5" fill="#fff"/><circle cx="11" cy="11" r="3.6" fill="#5f93d0"/></svg>
<svg class="a" style="left:120px;top:1056px" width="22" height="22" viewBox="0 0 22 22"><path d="M11 1L20 6V16L11 21L2 16V6Z" fill="#f0a020" stroke="#d05010" stroke-width="2"/><path d="M6 6L16 16M16 6L6 16" stroke="#7a2a0a" stroke-width="3"/></svg>
<svg class="a" style="left:161px;top:1056px" width="22" height="22" viewBox="0 0 22 22"><circle cx="11" cy="11" r="10.5" fill="#1aa0e0"/><path d="M6 7h10v7h-6l-3 3v-3H6z" fill="#fff"/></svg>
<svg class="a" style="left:200px;top:1056px" width="22" height="22" viewBox="0 0 22 22"><circle cx="11" cy="11" r="10" fill="#10a0e8"/><text x="11" y="17" font-family="Liberation Sans" font-weight="bold" font-size="16" fill="#fff" text-anchor="middle">S</text></svg>
<svg class="a" style="left:241px;top:1056px" width="22" height="22" viewBox="0 0 22 22"><circle cx="11" cy="11" r="10" fill="#a9c4e4"/><path d="M11 1A10 10 0 0 1 20 7L11 7Z" fill="#c9dcf0"/><circle cx="11" cy="11" r="5" fill="#fff"/><circle cx="11" cy="11" r="3.6" fill="#5f93d0"/></svg>
<svg class="a" style="left:323px;top:1053px" width="26" height="27" viewBox="0 0 26 27"><text x="13" y="24" font-family="Liberation Serif" font-weight="bold" font-size="30" fill="#e8541a" text-anchor="middle">X</text><text x="13" y="19" font-family="Liberation Serif" font-size="17" fill="#1c1cc4" text-anchor="middle">X</text><rect x="11.5" y="5" width="3" height="17" fill="#1c1cc4"/><rect x="8" y="4" width="10" height="2" fill="#1c1cc4"/></svg>
<svg class="a" style="left:364px;top:1056px" width="22" height="22" viewBox="0 0 22 22"><circle cx="11" cy="11" r="10" fill="#a9c4e4"/><path d="M11 1A10 10 0 0 1 20 7L11 7Z" fill="#c9dcf0"/><circle cx="11" cy="11" r="5" fill="#fff"/><circle cx="11" cy="11" r="3.6" fill="#5f93d0"/></svg>
<svg class="a" style="left:401px;top:1053px" width="26" height="27" viewBox="0 0 26 27"><text x="13" y="24" font-family="Liberation Serif" font-weight="bold" font-size="30" fill="#e8541a" text-anchor="middle">X</text><text x="13" y="19" font-family="Liberation Serif" font-size="17" fill="#1c1cc4" text-anchor="middle">X</text><rect x="11.5" y="5" width="3" height="17" fill="#1c1cc4"/><rect x="8" y="4" width="10" height="2" fill="#1c1cc4"/></svg>
<svg class="a" style="left:439px;top:1053px" width="26" height="27" viewBox="0 0 26 27"><text x="13" y="24" font-family="Liberation Serif" font-weight="bold" font-size="30" fill="#e8541a" text-anchor="middle">X</text><text x="13" y="19" font-family="Liberation Serif" font-size="17" fill="#1c1cc4" text-anchor="middle">X</text><rect x="11.5" y="5" width="3" height="17" fill="#1c1cc4"/><rect x="8" y="4" width="10" height="2" fill="#1c1cc4"/></svg>
<svg class="a" style="left:480px;top:1057px" width="22" height="20" viewBox="0 0 22 20"><path d="M1 3h7l2 2h11v14H1z" fill="#b8a47c"/><path d="M1 7h20v12H1z" fill="#d8caa4"/></svg>
<svg class="a" style="left:519px;top:1055px" width="22" height="24" viewBox="0 0 22 24"><rect x="2" y="3" width="16" height="19" fill="#fff" stroke="#999"/><path d="M5 8h10M5 11h10M5 14h10M5 17h8" stroke="#888"/><path d="M10 18L19 6L21 8L12 20L9 21Z" fill="#e07a2a"/></svg>
<svg class="a" style="left:565px;top:1056px" width="22" height="22" viewBox="0 0 22 22"><circle cx="11" cy="11" r="10" fill="#a9c4e4"/><path d="M11 1A10 10 0 0 1 20 7L11 7Z" fill="#c9dcf0"/><circle cx="11" cy="11" r="5" fill="#fff"/><circle cx="11" cy="11" r="3.6" fill="#5f93d0"/></svg>
<svg class="a" style="left:597px;top:1053px" width="26" height="27" viewBox="0 0 26 27"><text x="13" y="24" font-family="Liberation Serif" font-weight="bold" font-size="30" fill="#e8541a" text-anchor="middle">X</text><text x="13" y="19" font-family="Liberation Serif" font-size="17" fill="#1c1cc4" text-anchor="middle">X</text><rect x="11.5" y="5" width="3" height="17" fill="#1c1cc4"/><rect x="8" y="4" width="10" height="2" fill="#1c1cc4"/></svg>
<svg class="a" style="left:631px;top:1053px" width="26" height="27" viewBox="0 0 26 27"><text x="13" y="24" font-family="Liberation Serif" font-weight="bold" font-size="30" fill="#e8541a" text-anchor="middle">X</text><text x="13" y="19" font-family="Liberation Serif" font-size="17" fill="#1c1cc4" text-anchor="middle">X</text><rect x="11.5" y="5" width="3" height="17" fill="#1c1cc4"/><rect x="8" y="4" width="10" height="2" fill="#1c1cc4"/></svg>
<svg class="a" style="left:666px;top:1056px" width="22" height="22" viewBox="0 0 22 22"><circle cx="11" cy="11" r="10" fill="#a9c4e4"/><path d="M11 1A10 10 0 0 1 20 7L11 7Z" fill="#c9dcf0"/><circle cx="11" cy="11" r="5" fill="#fff"/><circle cx="11" cy="11" r="3.6" fill="#5f93d0"/></svg>
<svg class="a" style="left:697px;top:1053px" width="26" height="27" viewBox="0 0 26 27"><text x="13" y="24" font-family="Liberation Serif" font-weight="bold" font-size="30" fill="#e8541a" text-anchor="middle">X</text><text x="13" y="19" font-family="Liberation Serif" font-size="17" fill="#1c1cc4" text-anchor="middle">X</text><rect x="11.5" y="5" width="3" height="17" fill="#1c1cc4"/><rect x="8" y="4" width="10" height="2" fill="#1c1cc4"/></svg>
<svg class="a" style="left:730px;top:1053px" width="26" height="27" viewBox="0 0 26 27"><text x="13" y="24" font-family="Liberation Serif" font-weight="bold" font-size="30" fill="#e8541a" text-anchor="middle">X</text><text x="13" y="19" font-family="Liberation Serif" font-size="17" fill="#1c1cc4" text-anchor="middle">X</text><rect x="11.5" y="5" width="3" height="17" fill="#1c1cc4"/><rect x="8" y="4" width="10" height="2" fill="#1c1cc4"/></svg>
<svg class="a" style="left:763px;top:1053px" width="26" height="27" viewBox="0 0 26 27"><text x="13" y="24" font-family="Liberation Serif" font-weight="bold" font-size="30" fill="#e8541a" text-anchor="middle">X</text><text x="13" y="19" font-family="Liberation Serif" font-size="17" fill="#1c1cc4" text-anchor="middle">X</text><rect x="11.5" y="5" width="3" height="17" fill="#1c1cc4"/><rect x="8" y="4" width="10" height="2" fill="#1c1cc4"/></svg>
<svg class="a" style="left:811px;top:1056px" width="22" height="22" viewBox="0 0 22 22"><circle cx="11" cy="11" r="10" fill="#a9c4e4"/><path d="M11 1A10 10 0 0 1 20 7L11 7Z" fill="#c9dcf0"/><circle cx="11" cy="11" r="5" fill="#fff"/><circle cx="11" cy="11" r="3.6" fill="#5f93d0"/></svg>
<svg class="a" style="left:849px;top:1053px" width="26" height="27" viewBox="0 0 26 27"><text x="13" y="24" font-family="Liberation Serif" font-weight="bold" font-size="30" fill="#e8541a" text-anchor="middle">X</text><text x="13" y="19" font-family="Liberation Serif" font-size="17" fill="#1c1cc4" text-anchor="middle">X</text><rect x="11.5" y="5" width="3" height="17" fill="#1c1cc4"/><rect x="8" y="4" width="10" height="2" fill="#1c1cc4"/></svg>
<svg class="a" style="left:888px;top:1053px" width="26" height="27" viewBox="0 0 26 27"><text x="13" y="24" font-family="Liberation Serif" font-weight="bold" font-size="30" fill="#e8541a" text-anchor="middle">X</text><text x="13" y="19" font-family="Liberation Serif" font-size="17" fill="#1c1cc4" text-anchor="middle">X</text><rect x="11.5" y="5" width="3" height="17" fill="#1c1cc4"/><rect x="8" y="4" width="10" height="2" fill="#1c1cc4"/></svg>
<svg class="a" style="left:1055px;top:1056px" width="22" height="22" viewBox="0 0 22 22"><circle cx="11" cy="11" r="10" fill="#e8601a"/><circle cx="12" cy="10" r="6" fill="#2a4a9a"/><path d="M2 11A9 9 0 0 0 20 13C17 18 8 19 4 12Z" fill="#f08a10"/></svg>
<svg class="a" style="left:1094px;top:1057px" width="22" height="20" viewBox="0 0 22 20"><path d="M1 3h7l2 2h11v14H1z" fill="#b8a47c"/><path d="M1 7h20v12H1z" fill="#d8caa4"/></svg>
<svg class="a" style="left:1132px;top:1053px" width="26" height="27" viewBox="0 0 26 27"><text x="13" y="24" font-family="Liberation Serif" font-weight="bold" font-size="30" fill="#e8541a" text-anchor="middle">X</text><text x="13" y="19" font-family="Liberation Serif" font-size="17" fill="#1c1cc4" text-anchor="middle">X</text><rect x="11.5" y="5" width="3" height="17" fill="#1c1cc4"/><rect x="8" y="4" width="10" height="2" fill="#1c1cc4"/></svg>
<svg class="a" style="left:1172px;top:1053px" width="26" height="27" viewBox="0 0 26 27"><text x="13" y="24" font-family="Liberation Serif" font-weight="bold" font-size="30" fill="#e8541a" text-anchor="middle">X</text><text x="13" y="19" font-family="Liberation Serif" font-size="17" fill="#1c1cc4" text-anchor="middle">X</text><rect x="11.5" y="5" width="3" height="17" fill="#1c1cc4"/><rect x="8" y="4" width="10" height="2" fill="#1c1cc4"/></svg>
<svg class="a" style="left:1212px;top:1053px" width="26" height="27" viewBox="0 0 26 27"><text x="13" y="24" font-family="Liberation Serif" font-weight="bold" font-size="30" fill="#e8541a" text-anchor="middle">X</text><text x="13" y="19" font-family="Liberation Serif" font-size="17" fill="#1c1cc4" text-anchor="middle">X</text><rect x="11.5" y="5" width="3" height="17" fill="#1c1cc4"/><rect x="8" y="4" width="10" height="2" fill="#1c1cc4"/></svg>
<svg class="a" style="left:1296px;top:1053px" width="26" height="27" viewBox="0 0 26 27"><text x="13" y="24" font-family="Liberation Serif" font-weight="bold" font-size="30" fill="#e8541a" text-anchor="middle">X</text><text x="13" y="19" font-family="Liberation Serif" font-size="17" fill="#1c1cc4" text-anchor="middle">X</text><rect x="11.5" y="5" width="3" height="17" fill="#1c1cc4"/><rect x="8" y="4" width="10" height="2" fill="#1c1cc4"/></svg>
<svg class="a" style="left:1338px;top:1057px" width="22" height="20" viewBox="0 0 22 20"><path d="M1 3h7l2 2h11v14H1z" fill="#b8a47c"/><path d="M1 7h20v12H1z" fill="#d8caa4"/></svg>
<svg class="a" style="left:1378px;top:1057px" width="22" height="20" viewBox="0 0 22 20"><path d="M1 3h7l2 2h11v14H1z" fill="#b8a47c"/><path d="M1 7h20v12H1z" fill="#d8caa4"/></svg>
<svg class="a" style="left:1419px;top:1055px" width="20" height="24" viewBox="0 0 20 24"><path d="M1 1h12l6 6v16H1z" fill="#eef6e6" stroke="#9a9"/><rect x="4" y="11" width="12" height="8" fill="#3a9a2a"/><path d="M4 14h12M4 17h12M8 11v8M12 11v8" stroke="#cfe" stroke-width=".8"/></svg>
<svg class="a" style="left:1541px;top:1057px" width="22" height="20" viewBox="0 0 22 20"><path d="M1 3h7l2 2h11v14H1z" fill="#b8a47c"/><path d="M1 7h20v12H1z" fill="#d8caa4"/></svg>
<svg class="a" style="left:1581px;top:1057px" width="22" height="20" viewBox="0 0 22 20"><path d="M1 3h7l2 2h11v14H1z" fill="#a89a7c"/><path d="M1 7h20v12H1z" fill="#c8bca4"/><rect x="7" y="10" width="8" height="6" fill="none" stroke="#555"/></svg>
<svg class="a" style="left:1619px;top:1053px" width="26" height="27" viewBox="0 0 26 27"><text x="13" y="24" font-family="Liberation Serif" font-weight="bold" font-size="30" fill="#e8541a" text-anchor="middle">X</text><text x="13" y="19" font-family="Liberation Serif" font-size="17" fill="#1c1cc4" text-anchor="middle">X</text><rect x="11.5" y="5" width="3" height="17" fill="#1c1cc4"/><rect x="8" y="4" width="10" height="2" fill="#1c1cc4"/></svg>
<svg class="a" style="left:1659px;top:1053px" width="26" height="27" viewBox="0 0 26 27"><text x="13" y="24" font-family="Liberation Serif" font-weight="bold" font-size="30" fill="#e8541a" text-anchor="middle">X</text><text x="13" y="19" font-family="Liberation Serif" font-size="17" fill="#1c1cc4" text-anchor="middle">X</text><rect x="11.5" y="5" width="3" height="17" fill="#1c1cc4"/><rect x="8" y="4" width="10" height="2" fill="#1c1cc4"/></svg>
<svg class="a" style="left:2026px;top:1056px" width="22" height="22" viewBox="0 0 22 22"><path d="M3 3C1 10 5 19 20 19C18 13 12 5 3 3Z" fill="#f0a070" stroke="#d07040"/></svg>
<svg class="a" style="left:2064px;top:1053px" width="26" height="27" viewBox="0 0 26 27"><text x="13" y="24" font-family="Liberation Serif" font-weight="bold" font-size="30" fill="#e8541a" text-anchor="middle">X</text><text x="13" y="19" font-family="Liberation Serif" font-size="17" fill="#1c1cc4" text-anchor="middle">X</text><rect x="11.5" y="5" width="3" height="17" fill="#1c1cc4"/><rect x="8" y="4" width="10" height="2" fill="#1c1cc4"/></svg>
<svg class="a" style="left:2289px;top:1056px" width="22" height="22" viewBox="0 0 22 22"><path d="M3 3C1 10 5 19 20 19C18 13 12 5 3 3Z" fill="#f0a070" stroke="#d07040"/></svg>
<svg class="a" style="left:2365px;top:1056px" width="22" height="22" viewBox="0 0 22 22"><path d="M11 1L20 6V16L11 21L2 16V6Z" fill="#f0a020" stroke="#d05010" stroke-width="2"/><path d="M6 6L16 16M16 6L6 16" stroke="#7a2a0a" stroke-width="3"/></svg>
<div class="a" style="left:2265px;top:1056px;width:21px;height:22px;background:#fff;border:1px solid #999;text-align:center;font-family:'Liberation Sans';font-weight:bold;font-size:15px;line-height:21px;color:#e01010">19</div>
<svg class="a" style="left:2319px;top:1058px" width="14" height="16"><path d="M7 1C3 1 3 5 3 9L1 12H13L11 9C11 5 11 1 7 1Z M5 13A2 2 0 0 0 9 13" fill="#fff"/></svg>
<svg class="a" style="left:2340px;top:1056px" width="22" height="22" viewBox="0 0 22 22"><circle cx="11" cy="11" r="10" fill="#5ab83a"/><path d="M6 11L10 15L16 7" stroke="#fff" stroke-width="3" fill="none"/></svg>
<div class="a" style="left:2399px;top:1055px;width:89px;text-align:center;font-family:'Liberation Sans';color:#f0ece0;font-size:12px;line-height:12px;letter-spacing:.3px">19:00</div>
<div class="a" style="left:2399px;top:1067px;width:89px;text-align:center;font-family:'Liberation Sans';color:#f0ece0;font-size:9px;line-height:10px;letter-spacing:.45px">Monday 19 October</div>

</body></html>
